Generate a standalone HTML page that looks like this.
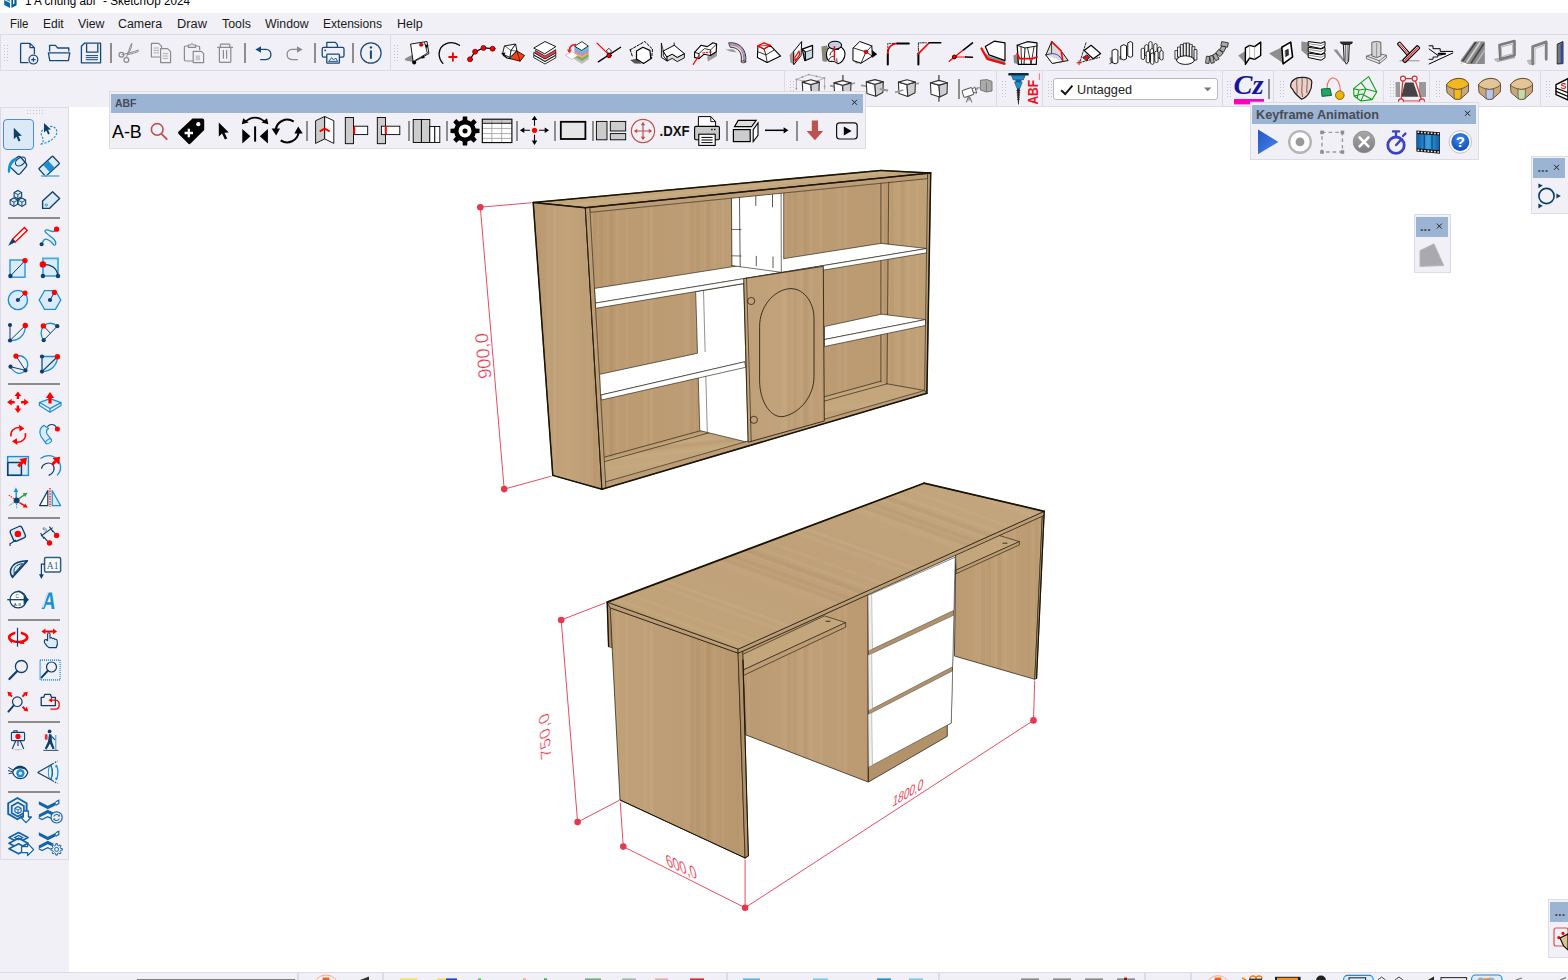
<!DOCTYPE html>
<html><head><meta charset="utf-8"><title>SketchUp</title>
<style>
html,body{margin:0;padding:0}
body{width:1568px;height:980px;overflow:hidden;background:#fff;position:relative;
 font-family:"Liberation Sans",sans-serif;font-size:12px;color:#000}
.abs{position:absolute}
.bg{position:absolute;background:#f1f0f6}
.tb{position:absolute;background:#f1f0f6;border:1px solid #dddce6;box-sizing:border-box}
.t{position:absolute;white-space:nowrap;transform-origin:0 50%;line-height:1}
.fl{position:absolute;background:#f1f0f6;border:1px solid #dddce6;box-sizing:border-box}
.flt{position:absolute;background:#9cb4d3}
.grip{position:absolute;width:5px;height:17px;
 background-image:radial-gradient(circle,#c4c4cf 0.6px,transparent 0.9px);background-size:3px 3px}
.gripv{position:absolute;width:17px;height:5px;
 background-image:radial-gradient(circle,#c4c4cf 0.6px,transparent 0.9px);background-size:3px 3px}
.sep{position:absolute;width:2px;background:#8e8e8e}
.sepb{position:absolute;width:1px;background:#8a8a8a}
.hsep{position:absolute;height:2px;background:#8c8c8c}
svg{position:absolute;left:0;top:0;overflow:visible}
</style></head>
<body>
<div class="abs" style="left:0;top:0;width:1568px;height:13px;background:#fff"></div>
<div class="t" id="ttl" style="transform:scaleX(0.9333);left:24.5px;top:-4.8px;font-size:12.5px;color:#000">1 A chung abf&quot; - SketchUp 2024</div>
<div class="bg" style="left:0;top:13px;width:1568px;height:94px"></div>
<div class="t" style="transform:scaleX(0.9129);left:10.2px;top:17.5px;font-size:12.5px;color:#1a1a1a">File</div>
<div class="t" style="transform:scaleX(0.9607);left:43px;top:17.5px;font-size:12.5px;color:#1a1a1a">Edit</div>
<div class="t" style="transform:scaleX(0.9860);left:78px;top:17.5px;font-size:12.5px;color:#1a1a1a">View</div>
<div class="t" style="transform:scaleX(0.9917);left:118.4px;top:17.5px;font-size:12.5px;color:#1a1a1a">Camera</div>
<div class="t" style="transform:scaleX(1.0250);left:177.4px;top:17.5px;font-size:12.5px;color:#1a1a1a">Draw</div>
<div class="t" style="transform:scaleX(0.9901);left:221.5px;top:17.5px;font-size:12.5px;color:#1a1a1a">Tools</div>
<div class="t" style="transform:scaleX(0.9827);left:265.3px;top:17.5px;font-size:12.5px;color:#1a1a1a">Window</div>
<div class="t" style="transform:scaleX(0.9647);left:323.4px;top:17.5px;font-size:12.5px;color:#1a1a1a">Extensions</div>
<div class="t" style="transform:scaleX(0.9993);left:397.3px;top:17.5px;font-size:12.5px;color:#1a1a1a">Help</div>
<div class="abs" style="left:0;top:34px;width:1568px;height:1px;background:#dddce6"></div>
<div class="tb" style="left:0px;top:34px;width:391px;height:37px"></div>
<div class="tb" style="left:390px;top:34px;width:1180px;height:37px"></div>
<div class="grip" style="left:3px;top:44px"></div>
<div class="grip" style="left:393px;top:44px"></div>
<div class="sep" style="left:110px;top:43px;height:20px"></div>
<div class="sep" style="left:244px;top:43px;height:20px"></div>
<div class="sep" style="left:314px;top:43px;height:20px"></div>
<div class="sep" style="left:352px;top:43px;height:20px"></div>
<div class="tb" style="left:784px;top:70px;width:214px;height:37px"></div>
<div class="grip" style="left:789px;top:80px"></div>
<div class="tb" style="left:996px;top:70px;width:48px;height:37px"></div>
<div class="grip" style="left:1001px;top:80px"></div>
<div class="tb" style="left:1042px;top:70px;width:182px;height:37px"></div>
<div class="grip" style="left:1047px;top:80px"></div>
<div class="tb" style="left:1222px;top:70px;width:53px;height:37px"></div>
<div class="grip" style="left:1226px;top:80px"></div>
<div class="tb" style="left:1273px;top:70px;width:112px;height:37px"></div>
<div class="grip" style="left:1279px;top:80px"></div>
<div class="tb" style="left:1383px;top:70px;width:48px;height:37px"></div>
<div class="grip" style="left:1389px;top:80px"></div>
<div class="tb" style="left:1429px;top:70px;width:113px;height:37px"></div>
<div class="grip" style="left:1435px;top:80px"></div>
<div class="tb" style="left:1540px;top:70px;width:31px;height:37px"></div>
<div class="grip" style="left:1545px;top:80px"></div>
<div class="sep" style="left:957.5px;top:79px;height:20px"></div>
<div class="sep" style="left:1268px;top:79px;height:20px"></div>
<div class="abs" style="left:1053px;top:78px;width:165px;height:21.5px;background:#fff;border:1px solid #b9b9c3;border-radius:3px;box-sizing:border-box"></div>
<div class="t" style="transform:scaleX(0.9392);left:1077px;top:82.5px;font-size:13.5px;color:#222">Untagged</div>
<div class="bg" style="left:0;top:107px;width:69px;height:866px"></div>
<div class="tb" style="left:0px;top:107px;width:69px;height:753px"></div>
<div class="gripv" style="left:26px;top:109px"></div>
<div class="abs" style="left:3px;top:119px;width:31px;height:31px;background:#dce9f7;border:1px solid #4a90d9;border-radius:4px;box-sizing:border-box"></div>
<div class="hsep" style="left:8px;top:217px;width:52px"></div>
<div class="hsep" style="left:8px;top:383px;width:52px"></div>
<div class="hsep" style="left:8px;top:517px;width:52px"></div>
<div class="hsep" style="left:8px;top:619px;width:52px"></div>
<div class="hsep" style="left:8px;top:721px;width:52px"></div>
<div class="hsep" style="left:8px;top:791px;width:52px"></div>
<div class="bg" style="left:0;top:972px;width:1568px;height:8px;border-top:1px solid #dddce6;box-sizing:border-box"></div>
<div class="abs" style="left:297px;top:973px;width:2px;height:7px;background:#dddce6"></div>
<div class="abs" style="left:382px;top:973px;width:2px;height:7px;background:#dddce6"></div>
<div class="abs" style="left:726px;top:973px;width:2px;height:7px;background:#dddce6"></div>
<div class="abs" style="left:938px;top:973px;width:2px;height:7px;background:#dddce6"></div>
<div class="abs" style="left:1144px;top:973px;width:2px;height:7px;background:#dddce6"></div>
<div class="abs" style="left:1190px;top:973px;width:2px;height:7px;background:#dddce6"></div>
<div class="abs" style="left:137px;top:978.5px;width:158px;height:1.5px;background:#7d7d80"></div>
<div class="fl" style="left:109px;top:91px;width:757px;height:58px"></div>
<div class="flt" style="left:111px;top:93.5px;width:752px;height:19px"></div>
<div class="t" style="transform:scaleX(0.9095);left:115px;top:97.5px;font-size:11.5px;font-weight:bold;color:#474b57">ABF</div>
<div class="sep" style="left:306px;top:121px;height:19.5px"></div>
<div class="sep" style="left:408px;top:121px;height:19.5px"></div>
<div class="sep" style="left:446px;top:121px;height:19.5px"></div>
<div class="sep" style="left:516px;top:121px;height:19.5px"></div>
<div class="sep" style="left:554px;top:121px;height:19.5px"></div>
<div class="sep" style="left:591.5px;top:121px;height:19.5px"></div>
<div class="sep" style="left:726px;top:121px;height:19.5px"></div>
<div class="sep" style="left:796px;top:121px;height:19.5px"></div>
<div class="fl" style="left:1250px;top:102px;width:229px;height:58px"></div>
<div class="flt" style="left:1252px;top:104.5px;width:224px;height:19px"></div>
<div class="t" style="transform:scaleX(0.9767);left:1256.3px;top:108px;font-size:13px;font-weight:bold;color:#474b57">Keyframe Animation</div>
<div class="fl" style="left:1531px;top:155.5px;width:40px;height:58.5px"></div>
<div class="flt" style="left:1533.3px;top:158.4px;width:32px;height:19.2px"></div>
<div class="t" style="left:1537.5px;top:161px;font-size:13px;font-weight:bold;color:#474b57">...</div>
<div class="fl" style="left:1414px;top:214px;width:37px;height:59px"></div>
<div class="flt" style="left:1416.4px;top:217.4px;width:31.4px;height:19.2px"></div>
<div class="t" style="left:1420px;top:220px;font-size:13px;font-weight:bold;color:#474b57">...</div>
<div class="fl" style="left:1548px;top:899px;width:24px;height:59px"></div>
<div class="flt" style="left:1550px;top:902px;width:20px;height:19.6px"></div>
<div class="t" style="left:1554.5px;top:905px;font-size:13px;font-weight:bold;color:#474b57">...</div>
<svg width="1568" height="980" viewBox="0 0 1568 980"><defs><linearGradient id="gSide" x1="0" y1="0" x2="1" y2="0"><stop offset="0" stop-color="#b99870"/><stop offset="0.5" stop-color="#c2a37a"/><stop offset="1" stop-color="#bb9a72"/></linearGradient><linearGradient id="gBack" x1="0" y1="0" x2="1" y2="0"><stop offset="0" stop-color="#bb9a70"/><stop offset="0.5" stop-color="#be9e76"/><stop offset="1" stop-color="#b9986f"/></linearGradient><linearGradient id="gDoor" x1="0" y1="0" x2="1" y2="0"><stop offset="0" stop-color="#bf9f77"/><stop offset="0.5" stop-color="#c2a37b"/><stop offset="1" stop-color="#bd9c74"/></linearGradient><linearGradient id="gRP" x1="0" y1="0" x2="1" y2="0"><stop offset="0" stop-color="#bc9b73"/><stop offset="0.5" stop-color="#c0a077"/><stop offset="1" stop-color="#ba9970"/></linearGradient><linearGradient id="gPed" x1="0" y1="0" x2="1" y2="0"><stop offset="0" stop-color="#bb9a72"/><stop offset="0.5" stop-color="#bfa078"/><stop offset="1" stop-color="#bb9971"/></linearGradient><linearGradient id="gLP" x1="0" y1="0" x2="1" y2="0"><stop offset="0" stop-color="#c0a178"/><stop offset="0.5" stop-color="#bd9d75"/><stop offset="1" stop-color="#b8966d"/></linearGradient><linearGradient id="gTop" x1="0" y1="1" x2="1" y2="0"><stop offset="0" stop-color="#c2a47a"/><stop offset="0.5" stop-color="#bfa079"/><stop offset="1" stop-color="#c4a77e"/></linearGradient><pattern id="grainV" width="97" height="40" patternUnits="userSpaceOnUse"><rect x="5.0" y="0" width="6" height="40" fill="#fff0cc" fill-opacity="0.034"/><rect x="11.0" y="0" width="4" height="40" fill="#5a3a10" fill-opacity="0.039"/><rect x="17.0" y="0" width="4" height="40" fill="#5a3a10" fill-opacity="0.048"/><rect x="25.0" y="0" width="1.5" height="40" fill="#fff0cc" fill-opacity="0.043"/><rect x="27.5" y="0" width="4" height="40" fill="#5a3a10" fill-opacity="0.057"/><rect x="34.5" y="0" width="2" height="40" fill="#fff0cc" fill-opacity="0.055"/><rect x="43.5" y="0" width="2" height="40" fill="#fff0cc" fill-opacity="0.046"/><rect x="61.0" y="0" width="4" height="40" fill="#fff0cc" fill-opacity="0.037"/><rect x="68.0" y="0" width="3" height="40" fill="#fff0cc" fill-opacity="0.064"/></pattern><pattern id="grainT" width="97" height="40" patternUnits="userSpaceOnUse" patternTransform="rotate(-70)"><rect x="5.0" y="0" width="6" height="40" fill="#fff0cc" fill-opacity="0.034"/><rect x="11.0" y="0" width="4" height="40" fill="#5a3a10" fill-opacity="0.039"/><rect x="17.0" y="0" width="4" height="40" fill="#5a3a10" fill-opacity="0.048"/><rect x="25.0" y="0" width="1.5" height="40" fill="#fff0cc" fill-opacity="0.043"/><rect x="27.5" y="0" width="4" height="40" fill="#5a3a10" fill-opacity="0.057"/><rect x="34.5" y="0" width="2" height="40" fill="#fff0cc" fill-opacity="0.055"/><rect x="43.5" y="0" width="2" height="40" fill="#fff0cc" fill-opacity="0.046"/><rect x="61.0" y="0" width="4" height="40" fill="#fff0cc" fill-opacity="0.037"/><rect x="68.0" y="0" width="3" height="40" fill="#fff0cc" fill-opacity="0.064"/></pattern><pattern id="grainC" width="97" height="40" patternUnits="userSpaceOnUse" patternTransform="rotate(84)"><rect x="5.0" y="0" width="6" height="40" fill="#fff0cc" fill-opacity="0.034"/><rect x="11.0" y="0" width="4" height="40" fill="#5a3a10" fill-opacity="0.039"/><rect x="17.0" y="0" width="4" height="40" fill="#5a3a10" fill-opacity="0.048"/><rect x="25.0" y="0" width="1.5" height="40" fill="#fff0cc" fill-opacity="0.043"/><rect x="27.5" y="0" width="4" height="40" fill="#5a3a10" fill-opacity="0.057"/><rect x="34.5" y="0" width="2" height="40" fill="#fff0cc" fill-opacity="0.055"/><rect x="43.5" y="0" width="2" height="40" fill="#fff0cc" fill-opacity="0.046"/><rect x="61.0" y="0" width="4" height="40" fill="#fff0cc" fill-opacity="0.037"/><rect x="68.0" y="0" width="3" height="40" fill="#fff0cc" fill-opacity="0.064"/></pattern></defs><polygon points="533.2,202.5 585.3,207.7 930.7,173.0 880.9,170.4" fill="#c3a67c" stroke="none"/><polygon points="533.2,202.5 585.3,207.7 930.7,173.0 880.9,170.4" fill="url(#grainC)" stroke="none"/><polygon points="533.2,202.5 585.3,207.7 930.7,173.0 880.9,170.4" fill="none" stroke="#1a1408" stroke-width="0.7" stroke-linejoin="round" />
<polygon points="533.2,202.5 585.3,207.7 601.9,489.2 552.8,475.4" fill="url(#gSide)" stroke="none"/><polygon points="533.2,202.5 585.3,207.7 601.9,489.2 552.8,475.4" fill="url(#grainV)" stroke="none"/><polygon points="533.2,202.5 585.3,207.7 601.9,489.2 552.8,475.4" fill="none" stroke="#1a1408" stroke-width="0.7" stroke-linejoin="round" />
<polygon points="589.8,212.4 927.7,178.6 924.6,390.2 605.5,481.9" fill="url(#gBack)" stroke="none"/><polygon points="589.8,212.4 927.7,178.6 924.6,390.2 605.5,481.9" fill="url(#grainV)" stroke="none"/><polygon points="589.8,212.4 927.7,178.6 924.6,390.2 605.5,481.9" fill="none" stroke="#1a1408" stroke-width="0" stroke-linejoin="round" />
<polygon points="604.8,459.5 880.9,382.0 887.0,383.8 924.5,390.5 605.5,481.9" fill="#c3a67c" stroke="none"/><polygon points="604.8,459.5 880.9,382.0 887.0,383.8 924.5,390.5 605.5,481.9" fill="url(#grainC)" stroke="none"/><polygon points="604.8,459.5 880.9,382.0 887.0,383.8 924.5,390.5 605.5,481.9" fill="none" stroke="#1a1408" stroke-width="0" stroke-linejoin="round" />
<line x1="604.8" y1="457.0" x2="880.9" y2="381.2" stroke="#1a1408" stroke-width="0.6" stroke-linecap="round" />
<line x1="604.8" y1="461.5" x2="887.0" y2="383.8" stroke="#1a1408" stroke-width="0.6" stroke-linecap="round" />
<polygon points="888.7,182.0 927.7,178.6 924.6,390.2 887.0,383.8" fill="#c0a077" stroke="none"/><polygon points="888.7,182.0 927.7,178.6 924.6,390.2 887.0,383.8" fill="url(#grainV)" stroke="none"/><polygon points="888.7,182.0 927.7,178.6 924.6,390.2 887.0,383.8" fill="none" stroke="#1a1408" stroke-width="0" stroke-linejoin="round" />
<line x1="880.9" y1="182.6" x2="880.9" y2="382.0" stroke="#1a1408" stroke-width="0.6" stroke-linecap="round" />
<line x1="888.7" y1="182.0" x2="887.0" y2="383.8" stroke="#1a1408" stroke-width="0.6" stroke-linecap="round" />
<line x1="887.0" y1="383.8" x2="924.5" y2="390.5" stroke="#1a1408" stroke-width="0.6" stroke-linecap="round" />
<polygon points="695.7,291.7 743.7,283.7 748.2,442.2 745.7,441.8 699.8,430.6" fill="#fff" stroke="none"/><polygon points="695.7,291.7 743.7,283.7 748.2,442.2 745.7,441.8 699.8,430.6" fill="none" stroke="#1a1408" stroke-width="0.6" stroke-linejoin="round" />
<line x1="703.5" y1="290.5" x2="707.3" y2="432.5" stroke="#444" stroke-width="0.6" stroke-linecap="round" />
<polygon points="594.5,288.4 880.9,243.4 926.9,248.5 595.3,303.1" fill="#fff" stroke="none"/><polygon points="594.5,288.4 880.9,243.4 926.9,248.5 595.3,303.1" fill="none" stroke="#1a1408" stroke-width="0.6" stroke-linejoin="round" />
<polygon points="595.3,303.1 926.9,248.5 926.9,252.8 595.7,308.3" fill="#fff" stroke="none"/><polygon points="595.3,303.1 926.9,248.5 926.9,252.8 595.7,308.3" fill="none" stroke="#1a1408" stroke-width="0.6" stroke-linejoin="round" />
<polygon points="731.5,198.2 783.7,193.0 783.7,259.7 781.3,272.3 731.9,265.6" fill="#fff" stroke="none"/><polygon points="731.5,198.2 783.7,193.0 783.7,259.7 781.3,272.3 731.9,265.6" fill="none" stroke="#1a1408" stroke-width="0" stroke-linejoin="round" />
<line x1="731.5" y1="198.2" x2="731.9" y2="265.6" stroke="#1a1408" stroke-width="0.7" stroke-linecap="round" />
<line x1="783.7" y1="193.0" x2="783.7" y2="258.7" stroke="#1a1408" stroke-width="0.6" stroke-linecap="round" />
<line x1="731.9" y1="265.6" x2="781.3" y2="272.3" stroke="#1a1408" stroke-width="0.6" stroke-linecap="round" />
<line x1="739.5" y1="197.4" x2="740.2" y2="266.6" stroke="#1a1408" stroke-width="0.7" stroke-linecap="round" />
<line x1="781.1" y1="193.3" x2="781.3" y2="272.3" stroke="#1a1408" stroke-width="0.6" stroke-linecap="round" />
<line x1="755.8" y1="196.3" x2="755.8" y2="205.5" stroke="#1a1408" stroke-width="0.7" stroke-linecap="round" />
<line x1="772.5" y1="194.7" x2="772.5" y2="206.8" stroke="#1a1408" stroke-width="0.7" stroke-linecap="round" />
<line x1="756.3" y1="256.3" x2="756.3" y2="265.8" stroke="#1a1408" stroke-width="0.7" stroke-linecap="round" />
<line x1="773.0" y1="257.0" x2="773.0" y2="267.6" stroke="#1a1408" stroke-width="0.7" stroke-linecap="round" />
<line x1="731.7" y1="229.4" x2="741.0" y2="229.6" stroke="#1a1408" stroke-width="0.6" stroke-linecap="round" />
<line x1="732.0" y1="255.8" x2="741.0" y2="256.0" stroke="#1a1408" stroke-width="0.6" stroke-linecap="round" />
<polygon points="600.2,374.2 696.8,353.4 745.6,345.0 744.7,361.8 600.9,395.0" fill="#fff" stroke="none"/><polygon points="600.2,374.2 696.8,353.4 745.6,345.0 744.7,361.8 600.9,395.0" fill="none" stroke="#1a1408" stroke-width="0" stroke-linejoin="round" />
<line x1="600.2" y1="374.2" x2="696.8" y2="353.4" stroke="#1a1408" stroke-width="0.6" stroke-linecap="round" />
<line x1="600.9" y1="395.0" x2="744.7" y2="361.8" stroke="#1a1408" stroke-width="0.6" stroke-linecap="round" />
<polygon points="600.9,395.0 744.7,361.8 745.7,367.3 601.4,400.0" fill="#fff" stroke="none"/><polygon points="600.9,395.0 744.7,361.8 745.7,367.3 601.4,400.0" fill="none" stroke="#1a1408" stroke-width="0.6" stroke-linejoin="round" />
<polygon points="824.5,326.5 881.5,314.2 925.5,319.6 824.5,339.5" fill="#fff" stroke="none"/><polygon points="824.5,326.5 881.5,314.2 925.5,319.6 824.5,339.5" fill="none" stroke="#1a1408" stroke-width="0.6" stroke-linejoin="round" />
<polygon points="824.5,339.5 925.5,319.6 925.4,325.5 824.5,346.5" fill="#fff" stroke="none"/><polygon points="824.5,339.5 925.5,319.6 925.4,325.5 824.5,346.5" fill="none" stroke="#1a1408" stroke-width="0.6" stroke-linejoin="round" />
<polygon points="605.5,481.9 924.5,390.5 926.9,393.3 601.9,489.2" fill="#bd9d75" stroke="none"/><polygon points="605.5,481.9 924.5,390.5 926.9,393.3 601.9,489.2" fill="none" stroke="#1a1408" stroke-width="0.6" stroke-linejoin="round" />
<polygon points="589.8,207.3 927.7,173.4 927.7,178.6 589.8,212.4" fill="#bd9d75" stroke="none"/><polygon points="589.8,207.3 927.7,173.4 927.7,178.6 589.8,212.4" fill="none" stroke="#1a1408" stroke-width="0.6" stroke-linejoin="round" />
<polygon points="743.7,278.6 823.3,266.3 824.3,421.0 748.2,442.2" fill="url(#gDoor)" stroke="none"/><polygon points="743.7,278.6 823.3,266.3 824.3,421.0 748.2,442.2" fill="url(#grainV)" stroke="none"/><polygon points="743.7,278.6 823.3,266.3 824.3,421.0 748.2,442.2" fill="none" stroke="#1a1408" stroke-width="0.8" stroke-linejoin="round" />
<line x1="746.6" y1="278.3" x2="751.2" y2="441.4" stroke="#1a1408" stroke-width="0.6" stroke-linecap="round" />
<path d="M759.6 380.6 L759.6 326.5 C759.6 307 773 291 788.3 288.8 C802.5 286.8 814 301.3 814 318.4 L814 376.5 C814 396.3 800 412.5 784.5 416.3 C771 419.5 759.6 401.5 759.6 380.6 Z" fill="none" stroke="#1a1408" stroke-width="0.8"/>
<circle cx="751.2" cy="301" r="3.6" fill="none" stroke="#1a1408" stroke-width="0.7"/>
<circle cx="753.9" cy="419.8" r="3.6" fill="none" stroke="#1a1408" stroke-width="0.7"/>
<polygon points="585.3,207.7 589.8,207.3 605.9,488.0 601.9,489.2" fill="#bd9d75" stroke="none"/><polygon points="585.3,207.7 589.8,207.3 605.9,488.0 601.9,489.2" fill="none" stroke="#1a1408" stroke-width="0.6" stroke-linejoin="round" />
<polygon points="927.7,173.4 930.7,173.0 926.9,393.3 924.6,390.2" fill="#bd9d75" stroke="none"/><polygon points="927.7,173.4 930.7,173.0 926.9,393.3 924.6,390.2" fill="none" stroke="#1a1408" stroke-width="0.6" stroke-linejoin="round" />
<line x1="533.2" y1="202.5" x2="880.9" y2="170.4" stroke="#1a1408" stroke-width="1.5" stroke-linecap="round" />
<line x1="880.9" y1="170.4" x2="930.7" y2="173.0" stroke="#1a1408" stroke-width="1.5" stroke-linecap="round" />
<line x1="533.2" y1="202.5" x2="552.8" y2="475.4" stroke="#1a1408" stroke-width="1.5" stroke-linecap="round" />
<line x1="552.8" y1="475.4" x2="601.9" y2="489.2" stroke="#1a1408" stroke-width="1.5" stroke-linecap="round" />
<line x1="601.9" y1="489.2" x2="926.9" y2="393.3" stroke="#1a1408" stroke-width="1.5" stroke-linecap="round" />
<line x1="930.7" y1="173.0" x2="926.9" y2="393.3" stroke="#1a1408" stroke-width="1.5" stroke-linecap="round" />
<line x1="533.2" y1="202.5" x2="585.3" y2="207.7" stroke="#1a1408" stroke-width="1.5" stroke-linecap="round" />
<line x1="585.3" y1="207.7" x2="930.7" y2="173.0" stroke="#1a1408" stroke-width="1.5" stroke-linecap="round" />
<line x1="585.3" y1="207.7" x2="601.9" y2="489.2" stroke="#1a1408" stroke-width="0.8" stroke-linecap="round" /><polygon points="955.8,554.0 1042.4,515.0 1034.8,679.3 954.4,656.0" fill="url(#gRP)" stroke="none"/><polygon points="955.8,554.0 1042.4,515.0 1034.8,679.3 954.4,656.0" fill="url(#grainV)" stroke="none"/><polygon points="955.8,554.0 1042.4,515.0 1034.8,679.3 954.4,656.0" fill="none" stroke="#1a1408" stroke-width="0.7" stroke-linejoin="round" />
<polygon points="1042.4,515.0 1044.2,515.4 1036.6,678.3 1034.8,679.3" fill="#bd9d75" stroke="none"/><polygon points="1042.4,515.0 1044.2,515.4 1036.6,678.3 1034.8,679.3" fill="none" stroke="#1a1408" stroke-width="0.6" stroke-linejoin="round" />
<polygon points="955.5,554.6 998.4,535.2 1019.4,541.6 956.1,570.1" fill="#c3a67c" stroke="none"/><polygon points="955.5,554.6 998.4,535.2 1019.4,541.6 956.1,570.1" fill="none" stroke="#1a1408" stroke-width="0.6" stroke-linejoin="round" />
<polygon points="956.1,570.1 1019.4,541.6 1019.4,544.9 956.1,573.7" fill="#bd9d75" stroke="none"/><polygon points="956.1,570.1 1019.4,541.6 1019.4,544.9 956.1,573.7" fill="none" stroke="#1a1408" stroke-width="0.6" stroke-linejoin="round" />
<line x1="1003.0" y1="543.2" x2="1007.0" y2="543.2" stroke="#1a1408" stroke-width="0.8" stroke-linecap="round" />
<polygon points="742.5,651.5 868.1,594.5 868.1,782.0 745.8,734.9" fill="url(#gPed)" stroke="none"/><polygon points="742.5,651.5 868.1,594.5 868.1,782.0 745.8,734.9" fill="url(#grainV)" stroke="none"/><polygon points="742.5,651.5 868.1,594.5 868.1,782.0 745.8,734.9" fill="none" stroke="#1a1408" stroke-width="0.7" stroke-linejoin="round" />
<polygon points="742.7,654.4 824.4,615.9 845.7,622.6 743.6,669.8" fill="#c3a67c" stroke="none"/><polygon points="742.7,654.4 824.4,615.9 845.7,622.6 743.6,669.8" fill="none" stroke="#1a1408" stroke-width="0.6" stroke-linejoin="round" />
<polygon points="743.6,669.8 845.7,622.6 845.7,627.1 743.6,675.4" fill="#bd9d75" stroke="none"/><polygon points="743.6,669.8 845.7,622.6 845.7,627.1 743.6,675.4" fill="none" stroke="#1a1408" stroke-width="0.6" stroke-linejoin="round" />
<line x1="826.0" y1="621.3" x2="830.0" y2="621.3" stroke="#1a1408" stroke-width="0.8" stroke-linecap="round" />
<polygon points="868.1,597.0 955.2,557.6 951.2,723.1 947.3,725.0 947.3,736.3 868.5,782.0" fill="#b39169" stroke="none"/><polygon points="868.1,597.0 955.2,557.6 951.2,723.1 947.3,725.0 947.3,736.3 868.5,782.0" fill="none" stroke="#1a1408" stroke-width="0.7" stroke-linejoin="round" />
<line x1="868.5" y1="766.3" x2="947.3" y2="725.0" stroke="#1a1408" stroke-width="0.6" stroke-linecap="round" />
<polygon points="869.5,594.9 955.2,557.2 953.9,610.3 870.3,650.1" fill="#fff" stroke="none"/><polygon points="869.5,594.9 955.2,557.2 953.9,610.3 870.3,650.1" fill="none" stroke="#555" stroke-width="0.6" stroke-linejoin="round" />
<polygon points="868.1,595.5 871.7,593.9 872.5,649.1 868.7,650.7" fill="#ededed" stroke="none"/><polygon points="868.1,595.5 871.7,593.9 872.5,649.1 868.7,650.7" fill="none" stroke="#777" stroke-width="0.4" stroke-linejoin="round" />
<polygon points="869.5,654.6 953.9,615.1 952.6,666.8 870.3,709.8" fill="#fff" stroke="none"/><polygon points="869.5,654.6 953.9,615.1 952.6,666.8 870.3,709.8" fill="none" stroke="#555" stroke-width="0.6" stroke-linejoin="round" />
<polygon points="868.1,655.2 871.7,653.6 872.5,708.8 868.7,710.4" fill="#ededed" stroke="none"/><polygon points="868.1,655.2 871.7,653.6 872.5,708.8 868.7,710.4" fill="none" stroke="#777" stroke-width="0.4" stroke-linejoin="round" />
<polygon points="869.5,713.8 952.6,670.8 951.2,723.1 870.3,766.3" fill="#fff" stroke="none"/><polygon points="869.5,713.8 952.6,670.8 951.2,723.1 870.3,766.3" fill="none" stroke="#555" stroke-width="0.6" stroke-linejoin="round" />
<polygon points="868.1,714.4 871.7,712.8 872.5,765.3 868.7,766.9" fill="#ededed" stroke="none"/><polygon points="868.1,714.4 871.7,712.8 872.5,765.3 868.7,766.9" fill="none" stroke="#777" stroke-width="0.4" stroke-linejoin="round" />
<polygon points="610.1,607.8 738.1,653.1 745.1,858.0 620.0,800.0" fill="url(#gLP)" stroke="none"/><polygon points="610.1,607.8 738.1,653.1 745.1,858.0 620.0,800.0" fill="url(#grainV)" stroke="none"/><polygon points="610.1,607.8 738.1,653.1 745.1,858.0 620.0,800.0" fill="none" stroke="#1a1408" stroke-width="0.7" stroke-linejoin="round" />
<polygon points="738.1,653.1 742.7,651.1 748.4,855.8 745.1,858.0" fill="#b39169" stroke="none"/><polygon points="738.1,653.1 742.7,651.1 748.4,855.8 745.1,858.0" fill="none" stroke="#1a1408" stroke-width="0.6" stroke-linejoin="round" />
<polygon points="607.2,602.1 610.1,607.8 611.7,648.0 608.6,646.5" fill="#b39169" stroke="none"/><polygon points="607.2,602.1 610.1,607.8 611.7,648.0 608.6,646.5" fill="none" stroke="#1a1408" stroke-width="0.5" stroke-linejoin="round" />
<polygon points="607.2,602.1 738.1,649.1 738.1,653.1 610.1,607.8" fill="#bd9d75" stroke="none"/><polygon points="607.2,602.1 738.1,649.1 738.1,653.1 610.1,607.8" fill="none" stroke="#1a1408" stroke-width="0.7" stroke-linejoin="round" />
<polygon points="738.1,649.1 1044.2,511.3 1044.2,515.4 742.7,651.1 738.1,653.1" fill="#bd9d75" stroke="none"/><polygon points="738.1,649.1 1044.2,511.3 1044.2,515.4 742.7,651.1 738.1,653.1" fill="none" stroke="#1a1408" stroke-width="0.7" stroke-linejoin="round" />
<polygon points="607.2,602.1 924.0,483.2 1044.2,511.3 738.1,649.1" fill="url(#gTop)" stroke="none"/><polygon points="607.2,602.1 924.0,483.2 1044.2,511.3 738.1,649.1" fill="url(#grainT)" stroke="none"/><polygon points="607.2,602.1 924.0,483.2 1044.2,511.3 738.1,649.1" fill="none" stroke="#1a1408" stroke-width="0.7" stroke-linejoin="round" />
<line x1="607.2" y1="602.1" x2="924.0" y2="483.2" stroke="#1a1408" stroke-width="1.7" stroke-linecap="round" />
<line x1="924.0" y1="483.2" x2="1044.2" y2="511.3" stroke="#1a1408" stroke-width="1.7" stroke-linecap="round" />
<line x1="607.2" y1="602.1" x2="608.6" y2="646.5" stroke="#1a1408" stroke-width="1.4" stroke-linecap="round" />
<line x1="1044.2" y1="511.3" x2="1036.6" y2="678.3" stroke="#1a1408" stroke-width="1.2" stroke-linecap="round" />
<line x1="620.0" y1="800.0" x2="745.1" y2="858.0" stroke="#1a1408" stroke-width="1.0" stroke-linecap="round" />
<line x1="745.1" y1="858.0" x2="748.4" y2="855.8" stroke="#1a1408" stroke-width="1.0" stroke-linecap="round" />
<line x1="748.4" y1="855.8" x2="742.9" y2="660.0" stroke="#1a1408" stroke-width="1.0" stroke-linecap="round" /><line x1="480.3" y1="207.2" x2="504.2" y2="489.1" stroke="#e5384e" stroke-width="0.9" stroke-linecap="round" />
<line x1="531.0" y1="202.8" x2="480.3" y2="207.2" stroke="#e5384e" stroke-width="0.9" stroke-linecap="round" />
<line x1="551.0" y1="476.3" x2="504.2" y2="489.1" stroke="#e5384e" stroke-width="0.9" stroke-linecap="round" />
<circle cx="480.3" cy="207.2" r="3.3" fill="#e5384e"/>
<circle cx="504.2" cy="489.1" r="3.3" fill="#e5384e"/>
<line x1="561.2" y1="620.0" x2="577.6" y2="822.1" stroke="#e5384e" stroke-width="0.9" stroke-linecap="round" />
<line x1="605.0" y1="603.0" x2="561.2" y2="620.0" stroke="#e5384e" stroke-width="0.9" stroke-linecap="round" />
<line x1="619.0" y1="800.5" x2="577.6" y2="822.1" stroke="#e5384e" stroke-width="0.9" stroke-linecap="round" />
<circle cx="561.2" cy="620.0" r="3.3" fill="#e5384e"/>
<circle cx="577.6" cy="822.1" r="3.3" fill="#e5384e"/>
<line x1="623.3" y1="846.6" x2="745.1" y2="907.7" stroke="#e5384e" stroke-width="0.9" stroke-linecap="round" />
<line x1="620.3" y1="803.0" x2="623.3" y2="846.6" stroke="#e5384e" stroke-width="0.9" stroke-linecap="round" />
<line x1="745.1" y1="860.0" x2="745.1" y2="907.7" stroke="#e5384e" stroke-width="0.9" stroke-linecap="round" />
<circle cx="623.3" cy="846.6" r="3.3" fill="#e5384e"/>
<circle cx="745.1" cy="907.7" r="3.3" fill="#e5384e"/>
<line x1="745.1" y1="907.7" x2="1033.5" y2="720.4" stroke="#e5384e" stroke-width="0.9" stroke-linecap="round" />
<line x1="1034.7" y1="681.0" x2="1033.5" y2="720.4" stroke="#e5384e" stroke-width="0.9" stroke-linecap="round" />
<circle cx="1033.5" cy="720.4" r="3.3" fill="#e5384e"/>
<text x="0" y="6.62" transform="matrix(-0.0845 -0.9964 0.9964 -0.0845 483 356)" text-anchor="middle" font-family="Liberation Sans, sans-serif" font-size="18.5" textLength="46" lengthAdjust="spacingAndGlyphs" fill="#e5384e" stroke="#fff" stroke-width="0.3">900,0</text>
<text x="0" y="5.73" transform="matrix(-0.05 -0.999 0.905 -0.42 544.7 736.4)" text-anchor="middle" font-family="Liberation Sans, sans-serif" font-size="16" textLength="45" lengthAdjust="spacingAndGlyphs" fill="#e5384e" stroke="#fff" stroke-width="0.3">750,0</text>
<text x="0" y="6.44" transform="matrix(0.9105 0.4153 0.22 0.975 681 866.4)" text-anchor="middle" font-family="Liberation Sans, sans-serif" font-size="18" textLength="33.5" lengthAdjust="spacingAndGlyphs" fill="#e5384e" stroke="#fff" stroke-width="0.12">600,0</text>
<text x="0" y="5.55" transform="matrix(0.854 -0.52 -0.1376 0.9905 908.1 792.4)" text-anchor="middle" font-family="Liberation Sans, sans-serif" font-size="15.5" textLength="36" lengthAdjust="spacingAndGlyphs" fill="#e5384e" stroke="#fff" stroke-width="0.05">1800,0</text></svg>
<svg width="1568" height="980" viewBox="0 0 1568 980"><g>
<text x="112" y="137.8" font-family="Liberation Sans, sans-serif" font-size="18" textLength="29.8" lengthAdjust="spacingAndGlyphs" fill="#000">A-B</text>
<circle cx="157.2" cy="129.4" r="5.8" fill="none" stroke="#c0504d" stroke-width="1.6"/><line x1="161.5" y1="133.8" x2="167.3" y2="139.6" stroke="#c0504d" stroke-width="1.8"/>
<path d="M192.5 118.6 L202.2 118.6 Q204.2 118.6 204.2 120.6 L204.2 130 L190.6 143.6 Q189.4 144.8 188.2 143.6 L178.6 134 Q177.4 132.8 178.6 131.6 Z" fill="#000"/>
<circle cx="198.3" cy="124.2" r="2.1" fill="#fff"/>
<path d="M184.6 133 h8.4 M188.8 128.8 v8.4" stroke="#fff" stroke-width="2.3" fill="none"/>
<path d="M218.8 122.6 L218.8 136.6 L222.1 133.6 L224.9 139.6 L227.2 138.5 L224.5 132.7 L228.8 132.4 Z" fill="#000"/>
<path d="M242.3 129 L250.4 136.2 L242.3 143.4 Z M267.9 129 L259.8 136.2 L267.9 143.4 Z" fill="#000"/>
<rect x="254.1" y="126.4" width="2" height="15.2" fill="#000"/>
<path d="M245.2 121.8 Q255 113.5 265 121.8" fill="none" stroke="#000" stroke-width="1.7"/>
<path d="M241.8 124.2 L243.2 118.2 L248.6 122.6 Z M268.4 124.2 L267 118.2 L261.6 122.6 Z" fill="#000"/>
<path d="M275.8 130.0 A11.4 11.4 0 0 1 293.7 121.7 M298.6 132.0 A11.4 11.4 0 0 1 280.7 140.3" fill="none" stroke="#000" stroke-width="2.1"/>
<path d="M271.6 128.6 L280 128.6 L276.2 135.6 Z M302.8 133.4 L294.4 133.4 L298.2 126.4 Z" fill="#000"/>
<path d="M315.6 120.7 L324.7 116.5 L324.7 138.9 L315.6 143.4 Z" fill="#ccc" stroke="#000" stroke-width="0.9"/>
<path d="M324.7 116.5 L333.8 120.7 L333.8 143.4 L324.7 138.9 Z" fill="#fff" stroke="#000" stroke-width="0.9"/>
<path d="M319.7 131.4 L324.7 128.6 L329.7 131.4" fill="none" stroke="#f00" stroke-width="1.8"/>
<rect x="345.3" y="117.5" width="8.2" height="26.2" fill="#ccc" stroke="#000" stroke-width="0.9"/><rect x="353.5" y="126.2" width="14.2" height="8.4" fill="#fff" stroke="#000" stroke-width="0.9"/><rect x="353.4" y="126.8" width="1.8" height="7.2" fill="#f00"/>
<rect x="377.3" y="117.5" width="8.2" height="26.2" fill="#ccc" stroke="#000" stroke-width="0.9"/><rect x="381.4" y="126.2" width="18.4" height="8.4" fill="#fff" stroke="#000" stroke-width="0.9"/><rect x="384.8" y="126.8" width="2" height="7.2" fill="#f00"/>
<rect x="413.2" y="119.5" width="8.2" height="23" fill="#ccc" stroke="#000" stroke-width="0.9"/><rect x="421.4" y="119.5" width="8.4" height="23" fill="#ccc" stroke="#000" stroke-width="0.9"/>
<rect x="429.8" y="126.5" width="5" height="16" fill="#fff" stroke="#000" stroke-width="0.9"/><rect x="434.8" y="126.5" width="5" height="16" fill="#fff" stroke="#000" stroke-width="0.9"/>
<path d="M462.6 120.6 L462.8 116.4 L467.2 116.4 L467.4 120.6 L470.6 121.9 L473.7 119.1 L476.8 122.2 L474.0 125.3 L475.3 128.5 L479.5 128.7 L479.5 133.1 L475.3 133.3 L474.0 136.5 L476.8 139.6 L473.7 142.7 L470.6 139.9 L467.4 141.2 L467.2 145.4 L462.8 145.4 L462.6 141.2 L459.4 139.9 L456.3 142.7 L453.2 139.6 L456.0 136.5 L454.7 133.3 L450.5 133.1 L450.5 128.7 L454.7 128.5 L456.0 125.3 L453.2 122.2 L456.3 119.1 L459.4 121.9 Z" fill="#000"/><circle cx="465" cy="130.9" r="10.8" fill="#000"/><circle cx="465" cy="130.9" r="6.5" fill="#fff"/><circle cx="465" cy="130.9" r="2.5" fill="#000"/>
<rect x="482.3" y="119.2" width="29.6" height="23.4" fill="#fff"/><rect x="482.3" y="119.2" width="29.6" height="4" fill="#c8c8c8"/>
<path d="M491.8 119.2 v23.4 M501.7 119.2 v23.4 M482.3 128.4 h29.6 M482.3 133.6 h29.6 M482.3 138.4 h29.6" stroke="#999" stroke-width="0.8" fill="none"/>
<path d="M482.3 123.3 h29.6" stroke="#000" stroke-width="0.9"/><rect x="482.3" y="119.2" width="29.6" height="23.4" fill="none" stroke="#000" stroke-width="1.1"/>
<circle cx="534.5" cy="130.3" r="2.6" fill="#f00"/>
<path d="M522.5 130.3 h7.5 M539.0 130.3 h7.5 M534.5 118.30000000000001 v7.5 M534.5 134.8 v7.5" stroke="#000" stroke-width="1.1"/>
<path d="M519.9 130.3 l4.4 -2.8 v5.6 Z M549.1 130.3 l-4.4 -2.8 v5.6 Z M534.5 115.70000000000002 l-2.8 4.4 h5.6 Z M534.5 144.9 l-2.8 -4.4 h5.6 Z" fill="#000"/>
<rect x="560.8" y="121.8" width="24.6" height="17.2" fill="#e6e6e6" stroke="#000" stroke-width="1.8"/>
<rect x="596.4" y="121.4" width="10.6" height="18.4" fill="#ccc" stroke="#000" stroke-width="0.9"/><rect x="610.3" y="121.4" width="15.4" height="9.6" fill="#ccc" stroke="#000" stroke-width="0.9"/><rect x="610.3" y="133.6" width="15.4" height="6.2" fill="#ccc" stroke="#000" stroke-width="0.9"/>
<circle cx="643" cy="131" r="11.6" fill="none" stroke="#c0504d" stroke-width="1.2"/>
<path d="M636 131 h14 M643 124 v14" stroke="#c0504d" stroke-width="1.2"/>
<path d="M633.8 131 l3.4 -2.2 v4.4 Z M652.2 131 l-3.4 -2.2 v4.4 Z M643 121.8 l-2.2 3.4 h4.4 Z M643 140.2 l-2.2 -3.4 h4.4 Z" fill="#c0504d"/>
<text x="659.6" y="136.3" font-family="Liberation Sans, sans-serif" font-weight="bold" font-size="14.4" textLength="30" lengthAdjust="spacingAndGlyphs" fill="#111">.DXF</text>
<path d="M698.4 116.6 L710.8 116.6 L715.6 121.6 L715.6 127 L698.4 127 Z" fill="#fff" stroke="#000" stroke-width="1"/><path d="M710.8 116.6 L710.8 121.6 L715.6 121.6" fill="none" stroke="#000" stroke-width="0.9"/>
<rect x="694.6" y="126.4" width="24.8" height="13.4" rx="1.2" fill="#c9c9c9" stroke="#000" stroke-width="1.1"/>
<rect x="711.2" y="128.8" width="1.4" height="1.4" fill="#000"/><rect x="714" y="128.8" width="1.4" height="1.4" fill="#000"/>
<rect x="698.8" y="134.2" width="16.4" height="11.2" fill="#fff" stroke="#000" stroke-width="1.1"/><path d="M701.4 137.4 h11.2 M701.4 140 h11.2 M701.4 142.6 h11.2" stroke="#000" stroke-width="1"/>
<rect x="733.4" y="129.6" width="16.8" height="12" fill="#ccc" stroke="#000" stroke-width="1.2"/>
<path d="M734.6 126.6 L738.2 120.4 L756.2 120.4 L751.6 126.6 Z" fill="#ddd" stroke="#000" stroke-width="1.1"/>
<path d="M753.2 129.6 L758 123 L758 135.4 L753.2 141.6 Z" fill="#fff" stroke="#000" stroke-width="1.1"/>
<path d="M765 130.3 H785" stroke="#000" stroke-width="1.5"/><path d="M788.4 130.3 L783.6 127.2 V133.4 Z" fill="#000"/>
<path d="M811.8 120.4 H818 V131 H823.2 L814.9 140.2 L806.6 131 H811.8 Z" fill="#c0504d"/>
<rect x="836.6" y="122.8" width="20.6" height="16.2" rx="3" fill="#f1f0f6" stroke="#111" stroke-width="1.2"/><path d="M843.8 126.4 V135.6 L851.6 131 Z" fill="#000"/>
<path d="M852 99.8 l5 5 M857 99.8 l-5 5" stroke="#222" stroke-width="1"/>
</g>
<defs><linearGradient id="kPlay" x1="0" y1="0" x2="1" y2="1"><stop offset="0" stop-color="#2456c8"/><stop offset="1" stop-color="#4a86ee"/></linearGradient><radialGradient id="kHelp" cx="0.5" cy="0.35" r="0.7"><stop offset="0" stop-color="#3f8df0"/><stop offset="1" stop-color="#0d47b5"/></radialGradient><linearGradient id="kX" x1="0" y1="0" x2="0" y2="1"><stop offset="0" stop-color="#a8a8a8"/><stop offset="1" stop-color="#7e7e7e"/></linearGradient><linearGradient id="kFilm" x1="0" y1="0" x2="1" y2="0"><stop offset="0" stop-color="#0d5ea8"/><stop offset="0.5" stop-color="#3aa0e0"/><stop offset="1" stop-color="#0d5ea8"/></linearGradient></defs>
<path d="M1258 129.6 V154.2 L1278.4 141.9 Z" fill="url(#kPlay)"/>
<circle cx="1300" cy="141.9" r="10.8" fill="#fdfdfd" stroke="#b5b5b5" stroke-width="2.4"/><circle cx="1300" cy="141.9" r="4.4" fill="#9a9a9a"/>
<rect x="1322" y="132.4" width="20.4" height="19.6" fill="none" stroke="#9a9a9a" stroke-width="1.4" stroke-dasharray="3.6 3"/>
<rect x="1320.2" y="130.6" width="3.6" height="3.6" fill="#8e8e8e"/>
<rect x="1320.2" y="150.2" width="3.6" height="3.6" fill="#8e8e8e"/>
<rect x="1340.6" y="130.6" width="3.6" height="3.6" fill="#8e8e8e"/>
<rect x="1340.6" y="150.2" width="3.6" height="3.6" fill="#8e8e8e"/>
<circle cx="1364" cy="141.9" r="10.8" fill="url(#kX)" stroke="#8a8a8a" stroke-width="0.8"/><path d="M1359.6 137.5 l8.8 8.8 M1368.4 137.5 l-8.8 8.8" stroke="#fff" stroke-width="2.6" stroke-linecap="round"/>
<circle cx="1396" cy="145.2" r="8.2" fill="none" stroke="#3b45c4" stroke-width="2.8"/><path d="M1393 131.4 h6 M1396 131.4 v4.5 M1396.2 145 l4.2 -4.6 M1403 136 l2.4 -2.4" stroke="#3b45c4" stroke-width="2.4" stroke-linecap="round" fill="none"/>
<path d="M1416.4 130.4 L1440 132.2 L1440 153.8 L1416.4 151.6 Z" fill="#111"/><path d="M1416.8 134 L1439.6 135.6 L1439.6 150.2 L1416.8 148.2 Z" fill="url(#kFilm)"/>
<path d="M1424.2 134.4 V148.9 M1432 135 V149.6" stroke="#0a2c55" stroke-width="0.9"/>
<rect x="1417.6" y="131.4" width="1.7" height="1.6" fill="#e8e8e8"/><rect x="1417.6" y="149.4" width="1.7" height="1.6" fill="#e8e8e8"/>
<rect x="1420.9" y="131.7" width="1.7" height="1.6" fill="#e8e8e8"/><rect x="1420.9" y="149.7" width="1.7" height="1.6" fill="#e8e8e8"/>
<rect x="1424.2" y="131.9" width="1.7" height="1.6" fill="#e8e8e8"/><rect x="1424.2" y="150.0" width="1.7" height="1.6" fill="#e8e8e8"/>
<rect x="1427.5" y="132.2" width="1.7" height="1.6" fill="#e8e8e8"/><rect x="1427.5" y="150.3" width="1.7" height="1.6" fill="#e8e8e8"/>
<rect x="1430.8" y="132.4" width="1.7" height="1.6" fill="#e8e8e8"/><rect x="1430.8" y="150.6" width="1.7" height="1.6" fill="#e8e8e8"/>
<rect x="1434.1" y="132.7" width="1.7" height="1.6" fill="#e8e8e8"/><rect x="1434.1" y="150.9" width="1.7" height="1.6" fill="#e8e8e8"/>
<rect x="1437.4" y="132.9" width="1.7" height="1.6" fill="#e8e8e8"/><rect x="1437.4" y="151.2" width="1.7" height="1.6" fill="#e8e8e8"/>
<circle cx="1460.3" cy="141.9" r="11.3" fill="#fafafa" stroke="#c2c2c8" stroke-width="1"/><circle cx="1460.3" cy="141.9" r="9" fill="url(#kHelp)"/>
<text x="1460.3" y="147.2" text-anchor="middle" font-family="Liberation Sans, sans-serif" font-weight="bold" font-size="15" fill="#fff">?</text>
<path d="M1465 110.8 l5 5 M1470 110.8 l-5 5" stroke="#222" stroke-width="1"/>
<path d="M1554 164.8 l5 5 M1559 164.8 l-5 5" stroke="#222" stroke-width="1"/>
<circle cx="1546.5" cy="196" r="7.6" fill="none" stroke="#0d3e66" stroke-width="1.6"/><path d="M1538.4 183.4 l4.4 2.2 -4.4 2.6 Z M1538.4 203.4 l4.4 2.4 -4.4 2.6 Z M1556.4 193.4 l4.4 2.5 -4.4 2.5 Z" fill="#0d3e66"/>
<path d="M1436.8 223.6 l5 5 M1441.8 223.6 l-5 5" stroke="#222" stroke-width="1"/>
<path d="M1420 250.6 L1434 243.8 L1443.8 265.6 L1420 266.4 Z" fill="#aaaaae" stroke="#b9b9bd" stroke-width="1" stroke-linejoin="round"/>
<rect x="1554" y="928" width="14" height="18" rx="2" fill="none" stroke="#e0504f" stroke-width="1.2"/><circle cx="1558.8" cy="937.6" r="1.6" fill="#f00"/><circle cx="1563" cy="933.4" r="1.6" fill="#f00"/><path d="M1560 938 L1568 934 L1568 950 L1563.6 946 Z" fill="#d8c48f" stroke="#111" stroke-width="1.2"/>
<path d="M4.2 0 L4.2 5 L10 8 L10 3 Z" fill="#0a6ab0"/><path d="M11.4 0 L11.4 8 L16.6 5.2 L16.6 0 L14.4 0 L14.4 3.6 L13 4.4 L13 0 Z" fill="#0a5a9a"/><path d="M6 0 L10 2 L10 0 Z" fill="#3a9ad8"/>
<path d="M20.6 43.4 H30 L34.4 47.6 V54 M28.4 62.6 H20.6 V43.4 M30 43.4 V47.6 H34.4" fill="none" stroke="#174a7c" stroke-width="1.3" stroke-linejoin="round"/><circle cx="33.4" cy="59.6" r="4.4" fill="#f1f0f6" stroke="#174a7c" stroke-width="1.2"/><path d="M31.2 59.6 h4.4 M33.4 57.4 v4.4" stroke="#174a7c" stroke-width="1.2"/>
<path d="M49.6 51.6 V45.4 H55.4 L57.8 48 H68.8 V51.4" fill="none" stroke="#174a7c" stroke-width="1.3" stroke-linejoin="round"/><path d="M48.4 52.8 H69.8 L68.4 60.6 H49.8 Z" fill="none" stroke="#174a7c" stroke-width="1.3" stroke-linejoin="round"/>
<path d="M84.4 43.2 H100.6 V62.8 H81.4 V46.2 Z" fill="none" stroke="#174a7c" stroke-width="1.3" stroke-linejoin="round"/><path d="M86.6 43.4 V52.2 H97.8 V43.4" fill="none" stroke="#174a7c" stroke-width="1.3"/><path d="M85.8 55.6 H98 M85.8 57.6 H98 M85.8 59.7 H98" stroke="#174a7c" stroke-width="1"/>
<path d="M131.6 43.4 C129.6 48 127.6 53 126.4 58 M138.8 50 C133 52 126 53.8 121.6 54.6 M132 43.4 C131.4 48.4 129.6 52 127.4 54.4 M138.6 51.4 C133.6 53.4 129.6 54.4 127 54.6" fill="none" stroke="#8b8b8b" stroke-width="1"/><circle cx="121.4" cy="54.8" r="2.4" fill="none" stroke="#8b8b8b" stroke-width="1.2"/><circle cx="126.4" cy="60" r="2.4" fill="none" stroke="#8b8b8b" stroke-width="1.2"/>
<path d="M151.4 43.4 H158.6 L161.6 46.4 V57 H151.4 Z" fill="#f1f0f6" stroke="#8b8b8b" stroke-width="1.2" stroke-linejoin="round"/><path d="M160.6 48.6 H167.6 L170.6 51.6 V62.6 H160.6 Z" fill="#f1f0f6" stroke="#8b8b8b" stroke-width="1.2" stroke-linejoin="round"/><path d="M153.6 48 h5.4 M153.6 50.4 h5.4 M153.6 52.8 h5.4 M162.8 53.6 h5.4 M162.8 56 h5.4 M162.8 58.4 h5.4" stroke="#a9a9a9" stroke-width="0.9"/>
<path d="M188.4 46 H185.6 Q184.4 46 184.4 47.2 V59.8 Q184.4 61 185.6 61 H193 M195.6 46 H198.4 Q199.6 46 199.6 47.2 V50" fill="none" stroke="#8b8b8b" stroke-width="1.2"/><path d="M188.4 47.4 V45 H190.4 Q192 42.4 193.6 45 H195.6 V47.4 Z" fill="none" stroke="#8b8b8b" stroke-width="1.1"/><path d="M193.2 51.4 H201.4 L203.6 53.6 V62.6 H193.2 Z" fill="#f1f0f6" stroke="#8b8b8b" stroke-width="1.2" stroke-linejoin="round"/><rect x="195.6" y="55.4" width="4.4" height="5" fill="#c8c8cc"/>
<path d="M217.2 47.4 H233 M220.4 47.4 V45 Q220.4 44.2 221.2 44.2 H229 Q229.8 44.2 229.8 45 V47.4 M219.4 47.6 V61.4 Q219.4 62.4 220.4 62.4 H229.8 Q230.8 62.4 230.8 61.4 V47.6 M223.4 50 V58.8 M226.6 50 V58.8" fill="none" stroke="#8b8b8b" stroke-width="1.2"/>
<path d="M260.6 49.4 H265.8 C272.6 49.6 272.6 59.4 265.8 59.6 H260.2" fill="none" stroke="#174a7c" stroke-width="1.3"/><path d="M255.4 49.4 L261 46.2 V52.8 Z" fill="#174a7c"/>
<path d="M297.4 49.4 H292.2 C285.4 49.6 285.4 59.4 292.2 59.6 H297.8" fill="none" stroke="#8b8b8b" stroke-width="1.3"/><path d="M302.6 49.4 L297 46.2 V52.8 Z" fill="#8b8b8b"/>
<path d="M326.8 47 V42.4 H335.4 L337.4 44.6 V47" fill="none" stroke="#174a7c" stroke-width="1.3" stroke-linejoin="round"/><path d="M326.6 57.2 H323.8 Q322.2 57.2 322.2 55.6 V49 Q322.2 47.4 323.8 47.4 H342.4 Q344 47.4 344 49 V55.6 Q344 57.2 342.4 57.2 H339.6" fill="none" stroke="#174a7c" stroke-width="1.3"/><rect x="326.8" y="54.2" width="12.6" height="9" rx="0.8" fill="#f1f0f6" stroke="#174a7c" stroke-width="1.3"/><path d="M328.6 61.4 L331.6 57.6 L333.6 60 L335.6 58 L337.8 61.4 Z" fill="none" stroke="#174a7c" stroke-width="0.9"/><circle cx="325.2" cy="50.4" r="0.9" fill="#174a7c"/>
<circle cx="370.9" cy="53" r="10.2" fill="none" stroke="#174a7c" stroke-width="1.2"/><rect x="369.9" y="50.4" width="2" height="8.4" fill="#174a7c"/><circle cx="370.9" cy="47.4" r="1.2" fill="#174a7c"/>
<g transform="translate(405 41)" stroke-linejoin="round" stroke-linecap="round"><path d="M-0.3 17.7 L6.7 13.9 L8.6 20.9 L0.3 19.6 Z" fill="#8f8f8f" stroke="none" stroke-width="0" /><path d="M6 3 L22 0.5 L23.9 12.6 L8.6 20.9 Z" fill="#fff" stroke="#000" stroke-width="0.9" /><path d="M19.6 1.6 L22.4 12.2 L10 19.4" fill="none" stroke="#000" stroke-width="0.8" /><path d="M21.6 7 L20 3.4 L23 4.4 Z" fill="#000" stroke="#000" stroke-width="0.3" /><path d="M19.6 16.8 L16.4 17.4 L18.4 14.6 Z" fill="#000" stroke="#000" stroke-width="0.3" /><circle cx="16.2" cy="3.7" r="1.8" fill="#e00" stroke="#700" stroke-width="0.5"/><circle cx="9.2" cy="21.6" r="2" fill="#000" stroke="none" stroke-width="0"/></g>
<g transform="translate(437 41)" stroke-linejoin="round" stroke-linecap="round"><path d="M22.5 4.3 C14 -1.5 2.6 3 2.1 12.6 C2 17 3.6 20 5.9 22.4" fill="none" stroke="#000" stroke-width="1.3"/><path d="M12.1 16 h7.6 M15.9 12.2 v7.6" stroke="#e00" stroke-width="1.8"/></g>
<g transform="translate(469 41)" stroke-linejoin="round" stroke-linecap="round"><path d="M1 18.3 L6.1 10.7 L14.5 6.9 L24 7.7" fill="none" stroke="#000" stroke-width="1.2" /><circle cx="1" cy="18.3" r="2.5" fill="#f00" stroke="#400" stroke-width="0.7"/><circle cx="6.1" cy="10.7" r="2.5" fill="#f00" stroke="#400" stroke-width="0.7"/><circle cx="14.5" cy="6.9" r="2.5" fill="#f00" stroke="#400" stroke-width="0.7"/><circle cx="23.6" cy="7.7" r="2.5" fill="#f00" stroke="#400" stroke-width="0.7"/></g>
<g transform="translate(501 41)" stroke-linejoin="round" stroke-linecap="round"><path d="M3.8 4.9 L14.6 3 L15.9 10 L8.9 16.4 L1.9 13.2 Z" fill="#fff" stroke="#000" stroke-width="0.9" /><path d="M3.8 4.9 L10 9.5 L14.6 3 L10 9.5 L8.9 16.4 L10 9.5 L15.9 10" fill="none" stroke="#000" stroke-width="0.6" /><path d="M15.9 10 L23.6 14.5 L19.1 20.2 L9.5 17.7 Z" fill="#f4400a" stroke="#000" stroke-width="0.8" /><path d="M15.9 10 L19.1 20.2" fill="none" stroke="#000" stroke-width="0.6" /><path d="M0.6 12.2 L4.2 11.8 L2.8 15 Z" fill="#000" stroke="#000" stroke-width="0.3" /><path d="M2.6 14.2 L6 17 L9.5 17.7" fill="none" stroke="#000" stroke-width="1.2" /></g>
<g transform="translate(533 41)" stroke-linejoin="round" stroke-linecap="round"><path d="M1.1 14.4 L12 20.6 L22.8 14.4 L22.8 16.8 L12 23 L1.1 16.8 Z" fill="#fff" stroke="#000" stroke-width="0.8" /><path d="M1.1 11.6 L12 17.8 L22.8 11.6 L22.8 14 L12 20.2 L1.1 14 Z" fill="#fff" stroke="#000" stroke-width="0.8" /><path d="M2.6 9.6 L12 15 L22.8 8.6 L22.8 12 L12 18 L2.6 12.6 Z" fill="#e8404a" stroke="#000" stroke-width="0.6" /><path d="M1.1 6.9 L12 0.5 L22.8 5.6 L12 12.6 Z" fill="#fff" stroke="#000" stroke-width="0.9" /></g>
<g transform="translate(565 41)" stroke-linejoin="round" stroke-linecap="round"><path d="M10 16.4 L16.9 20.4 L23.3 16.4 L23.3 18.2 L16.9 22.4 L10 18.2 Z" fill="#c8c8c8" stroke="#999" stroke-width="0.5" /><path d="M10 13.4 L16.9 17.6 L23.3 13.4 L23.3 15.6 L16.9 19.8 L10 15.6 Z" fill="#74b566" stroke="#4a8040" stroke-width="0.4" /><path d="M10 10.8 L16.9 15 L23.3 10.8 L23.3 13 L16.9 17.2 L10 13 Z" fill="#f0b45e" stroke="#b88030" stroke-width="0.4" /><path d="M10 8.2 L16.9 12.4 L23.3 8.2 L23.3 10.4 L16.9 14.6 L10 10.4 Z" fill="#c78ae6" stroke="#9060b0" stroke-width="0.4" /><path d="M10 5.6 L16.9 9.8 L23.3 5.6 L23.3 7.8 L16.9 12 L10 7.8 Z" fill="#4fd2e4" stroke="#2a9aa8" stroke-width="0.4" /><path d="M10 5 L16.9 0.6 L23.3 5 L16.9 9.2 Z" fill="#fff" stroke="#000" stroke-width="0.8" /><path d="M0.7 13.9 L7.1 10.7 L12.9 14.5 L7.1 18.3 Z" fill="#fff" stroke="#aaa" stroke-width="0.6" /><path d="M4.4 10.6 C4 6 6.6 3.6 10.4 3.6" fill="none" stroke="#e8202a" stroke-width="1.8"/><path d="M2 8.4 L7 8.8 L4.2 12 Z" fill="#e8202a" stroke="none" stroke-width="0" /></g>
<g transform="translate(597 41)" stroke-linejoin="round" stroke-linecap="round"><path d="M1.3 20.9 L23.6 6.2" fill="none" stroke="#000" stroke-width="1.3" /><path d="M0 2.1 L12.1 13.9" fill="none" stroke="#f00" stroke-width="1.3" /><path d="M12.1 7.6 L14.6 10.2 L12.1 12.6 L9.6 10.2 Z" fill="#fff" stroke="#000" stroke-width="0.8" /><circle cx="12.1" cy="14.5" r="2.2" fill="#f00" stroke="#000" stroke-width="0.8"/></g>
<g transform="translate(629 41)" stroke-linejoin="round" stroke-linecap="round"><path d="M1.2 19 L7.5 17.8 L12.6 22.8 L5.6 22.4 Z" fill="#555" stroke="none" stroke-width="0" /><path d="M1.2 8.8 L15.8 0.5 L23.5 8.1 L22.6 17.5" fill="none" stroke="#000" stroke-width="1" stroke-dasharray="2.4 1.6"/><path d="M1.2 8.8 L3.6 16" fill="none" stroke="#000" stroke-width="1" stroke-dasharray="2.4 1.6"/><path d="M7.5 10 L13.9 6.2 L20.9 9.4 L21.8 17.7 L14.5 22.4 L7.5 18.1 Z" fill="#fff" stroke="#000" stroke-width="1.2" /></g>
<g transform="translate(661 41)" stroke-linejoin="round" stroke-linecap="round"><path d="M2.3 10 L2.3 14.6 L6.1 20 L6.1 15.8 Z" fill="#fff" stroke="#000" stroke-width="0.9" /><path d="M6.1 15.8 L6.1 20 L11.2 17.4 L16.3 20.6 L23.4 16.8 L23.4 12.6 L16.3 16.4 L11.2 13.2 Z" fill="#ddd" stroke="#000" stroke-width="0.9" /><path d="M2.3 10 L13.2 4.3 L23.4 12.6 L16.3 16.4 L11.2 13.2 L6.1 15.8 Z" fill="#fff" stroke="#000" stroke-width="1" /><path d="M0.4 2.4 L0.4 16.4 L6.1 20" fill="none" stroke="#000" stroke-width="0.9" /><path d="M13.2 2 L13.2 4.3" fill="none" stroke="#000" stroke-width="0.9" /><path d="M0.4 2.4 L2.3 10" fill="none" stroke="#000" stroke-width="0.7" /></g>
<g transform="translate(693 41)" stroke-linejoin="round" stroke-linecap="round"><path d="M14 16 L24 9 L24 15 L15 20.6 Z" fill="#9a9a9a" stroke="none" stroke-width="0" /><path d="M1.6 11.3 L7.9 4.3 L14.3 5.6 L20 1.8 L23.6 3 L23.2 10.7 L17.5 14.5 L11.1 13.2 L6 17.7 L1.6 16.4 Z" fill="#fff" stroke="#000" stroke-width="1.1" /><path d="M1.6 11.3 L6 12.6 L6 17.7" fill="none" stroke="#000" stroke-width="0.9" /><path d="M6 12.6 L11.4 7.6 L17.5 9 L23.6 3" fill="none" stroke="#000" stroke-width="0.8" /><path d="M17.5 9 L17.5 14.5" fill="none" stroke="#000" stroke-width="0.8" /><path d="M0.3 23.4 L6 14.5" fill="none" stroke="#f00" stroke-width="1.2" /><path d="M9.6 12 L18.6 10.8" fill="none" stroke="#f00" stroke-width="1" stroke-dasharray="2 1.4"/></g>
<g transform="translate(725 41)" stroke-linejoin="round" stroke-linecap="round"><path d="M0.2 8.6 L8 8.2 L12 11.6 L5 10.6 Z" fill="#999" stroke="none" stroke-width="0" /><path d="M4 1.8 C14 0.6 22.4 8 20.6 21 L16.2 20.4 C17.6 11 12.6 6.4 5.6 6.2 Z" fill="#dcdcdc" stroke="#222" stroke-width="0.9"/><path d="M4.8 4 C14 3.4 20 10 18.6 20.8" fill="none" stroke="#c03050" stroke-width="0.7"/><path d="M4.4 2.8 C15 2 21.4 9 19.6 21" fill="none" stroke="#5050d0" stroke-width="0.6"/><ellipse cx="18.4" cy="20.8" rx="2.3" ry="1" fill="#bbb" stroke="#222" stroke-width="0.7"/></g>
<g transform="translate(757 41)" stroke-linejoin="round" stroke-linecap="round"><path d="M0.9 4.9 L0.4 16.4 L10.2 21.5 L23.6 15.1 L13.2 4.3 L7 7.9 Z" fill="#fff" stroke="#000" stroke-width="1.1" /><path d="M0.9 10.7 L8.9 13.9 L16.6 9.4" fill="none" stroke="#000" stroke-width="0.8" /><path d="M7 7.9 L8.9 13.9 L10.2 21.5" fill="none" stroke="#000" stroke-width="0.8" /><path d="M0.9 4.9 L7 1.8 L13.2 4.3 L7 7.9 Z" fill="#fff" stroke="#f00" stroke-width="1.3" /><path d="M0.9 4.9 L13.2 4.3" fill="none" stroke="#f00" stroke-width="0.8" /></g>
<g transform="translate(789 41)" stroke-linejoin="round" stroke-linecap="round"><path d="M0.6 14 L5 9 L5 23.4 L1.4 21.6 Z" fill="#9a9490" stroke="none" stroke-width="0" /><path d="M13.3 8.1 L23.5 4.3 L23.5 16.4 L15.8 19.6 Z" fill="#fff" stroke="#000" stroke-width="1.3" /><path d="M16.4 11 L23.5 8.6 L23.5 16.4 L16.4 19.2 Z" fill="#c6dbe4" stroke="#000" stroke-width="0.7" /><path d="M13.3 8.1 L16.4 11 L16.4 19.2" fill="none" stroke="#000" stroke-width="1.1" /><path d="M5 10 L12.7 0.5 L12 14.5 L5 23.4 Z" fill="#fff" stroke="#000" stroke-width="1" /><path d="M5.9 16.4 L10.1 10 L10.5 13.9 L6.3 20.2 Z" fill="#fff" stroke="#f00" stroke-width="1.2" /></g>
<g transform="translate(821 41)" stroke-linejoin="round" stroke-linecap="round"><path d="M0.4 5.6 L6 4.6 L9 12 L5.4 21 L1.4 20 Z" fill="#8a8878" stroke="none" stroke-width="0" /><path d="M5.5 12 C6 6.4 11 4.4 13.6 4.6 C19 3.6 24 8 24 13 C24 18 20 22.6 17 22.8 C15 21 13.4 19.8 10 20.4 C7 20.8 5 17 5.5 12 Z" fill="#fff" stroke="#000" stroke-width="1.1"/><ellipse cx="14" cy="4.2" rx="6.6" ry="4" fill="#c4cfe6" stroke="#000" stroke-width="1.1"/><path d="M9 14 C10 10 13 8 17.6 8.4 M7.6 19 C9 16 11 15 13 15.4" fill="none" stroke="#000" stroke-width="0.9"/><path d="M14.4 19.4 L17 22.8 L16 16 Z" fill="#777" stroke="none" stroke-width="0" /><path d="M13.4 5.6 L13.4 19" fill="none" stroke="#f00" stroke-width="1.4" /></g>
<g transform="translate(853 41)" stroke-linejoin="round" stroke-linecap="round"><path d="M0.2 19.4 L3.6 17.6 L8 22.2 L3 22.4 Z" fill="#9a9a8a" stroke="none" stroke-width="0" /><path d="M0.3 6.9 L6.7 0.5 L18.8 4.9 L19.4 15.1 L8 22.2 L0.3 19.6 Z" fill="#fff" stroke="#000" stroke-width="1" /><path d="M0.3 6.9 L13 10.9 L18.8 4.9" fill="none" stroke="#000" stroke-width="0.8" /><path d="M13 10.9 L8 22.2" fill="none" stroke="#000" stroke-width="0.8" /><path d="M13 10.9 L19.4 15.1" fill="none" stroke="#000" stroke-width="0.8" /><path d="M19.4 9.6 L23.9 13.2 L19.4 16.4 Z" fill="#000" stroke="#000" stroke-width="0.4" /><circle cx="13" cy="10.9" r="1.9" fill="#f00" stroke="#600" stroke-width="0.5"/></g>
<g transform="translate(885 41)" stroke-linejoin="round" stroke-linecap="round"><path d="M2.8 23.4 L2.8 12.4" fill="none" stroke="#000" stroke-width="2" /><path d="M2.8 12.4 C3 6 7 2.6 12.3 2.4" fill="none" stroke="#f00" stroke-width="1.8"/><path d="M12.3 2.4 L23.8 2.4" fill="none" stroke="#000" stroke-width="2" /><path d="M2.8 10 L2.8 2.4 L10 2.4" fill="none" stroke="#000" stroke-width="0.7" stroke-dasharray="1.6 1.4"/></g>
<g transform="translate(917 41)" stroke-linejoin="round" stroke-linecap="round"><path d="M1.4 23.4 L1.4 12.6" fill="none" stroke="#000" stroke-width="2" /><path d="M1.4 12.6 L12.2 1.8" fill="none" stroke="#f00" stroke-width="1.6" /><path d="M12.2 1.8 L23.7 1.8" fill="none" stroke="#000" stroke-width="1.6" /><path d="M1.4 10 L1.4 1.8 L10 1.8" fill="none" stroke="#000" stroke-width="0.8" stroke-dasharray="2.6 1.2 0.8 1.2"/></g>
<g transform="translate(949 41)" stroke-linejoin="round" stroke-linecap="round"><path d="M0.2 20.2 L14.6 8.8" fill="none" stroke="#f00" stroke-width="1.3" /><path d="M14.6 8.8 L23.5 1.8" fill="none" stroke="#000" stroke-width="1.5" /><path d="M5.3 16 L16.5 16" fill="none" stroke="#f00" stroke-width="1.2" /><path d="M16.5 16 L23.5 16.3" fill="none" stroke="#000" stroke-width="1.4" /><circle cx="5.3" cy="16" r="2" fill="#e00" stroke="#000" stroke-width="0.8"/></g>
<g transform="translate(981 41)" stroke-linejoin="round" stroke-linecap="round"><path d="M1 9.4 L6.8 19.6 L23.9 24 L23.9 20 L8.1 15 Z" fill="#8a9090" stroke="none" stroke-width="0" /><path d="M4.3 5.6 L13.2 0.2 L24 1.8 L24 19.6 L8.1 13.9 Z" fill="#fff" stroke="#000" stroke-width="1.2" /><path d="M0.5 7.5 L6.2 17.7 L23.6 22.8" fill="none" stroke="#f00" stroke-width="2.2" /></g>
<g transform="translate(1013 41)" stroke-linejoin="round" stroke-linecap="round"><path d="M0.4 14.6 L4.4 13 L5.4 23.4 L1 22 Z" fill="#8a8a8a" stroke="none" stroke-width="0" /><path d="M4.2 4.3 L14.4 0.7 L24 1.8 L23.3 23.4 L5.4 23.4 Z" fill="#fff" stroke="#000" stroke-width="1.2" /><path d="M4.2 4.3 L12 7 L24 5" fill="none" stroke="#000" stroke-width="0.9" /><path d="M12 7 L11 23.4" fill="none" stroke="#000" stroke-width="0.9" /><path d="M8 6 L8.6 23.4" fill="none" stroke="#000" stroke-width="0.8" /><path d="M14.6 6.8 L18 23.4 L21 6" fill="none" stroke="#000" stroke-width="0.8" /><path d="M4.2 12.6 L6.7 17.7 L19.5 17.7 L24 16" fill="none" stroke="#f00" stroke-width="1.8" /></g>
<g transform="translate(1045 41)" stroke-linejoin="round" stroke-linecap="round"><path d="M6.6 0.7 L0.9 13.9 L7.2 22.4 L23.2 19.6 L16.2 10 Z" fill="#dadad4" stroke="#000" stroke-width="0.9" /><path d="M6.6 0.7 L6.6 12.6 L0.9 13.9" fill="none" stroke="#000" stroke-width="0.7" /><path d="M6.6 12.6 C11 12.4 15 14.6 16.8 18.6" fill="none" stroke="#3040f0" stroke-width="1"/><path d="M0.9 13.9 L7.2 22.4 L17.7 20.4" fill="#fff" stroke="#000" stroke-width="0.8" /><path d="M6.6 0.7 L16.2 10 L17.7 19.6" fill="none" stroke="#f00" stroke-width="1.6" /></g>
<g transform="translate(1077 41)" stroke-linejoin="round" stroke-linecap="round"><path d="M9 1.8 L2.7 21.5 L22.6 16.4" fill="none" stroke="#000" stroke-width="0.8" stroke-dasharray="2 1.4"/><path d="M7.1 9.4 L14.1 4.3 L23.7 12.6 L16.1 17.7 Z" fill="#fff" stroke="#000" stroke-width="1.2" /><path d="M5.9 16.4 L9.7 13.9 L12.9 16.4 L9.4 19.4 Z" fill="#e01010" stroke="#000" stroke-width="0.7" /><path d="M0 21.8 h4 M2 19.8 v4" stroke="#f00" stroke-width="1"/></g>
<g transform="translate(1109 41)" stroke-linejoin="round" stroke-linecap="round"><path d="M0.4 17 L3.4 15.6 L4 22.6 L1 20.6 Z" fill="#8f8f8f" stroke="none" stroke-width="0" /><path d="M10 15.6 L12.4 14.6 L12.4 19.6 L10.4 18.6 Z" fill="#8f8f8f" stroke="none" stroke-width="0" /><path d="M3.4 9.299999999999999 L6.15 8.1 L8.9 9.299999999999999 L8.9 21.6 L6.15 22.8 L3.4 21.6 Z" fill="#fff" stroke="#000" stroke-width="0.9" /><path d="M12.1 4.9 L14.8 3.7 L17.5 4.9 L17.5 17.8 L14.8 19 L12.1 17.8 Z" fill="#fff" stroke="#000" stroke-width="0.9" /><path d="M19.1 1.7 L21.35 0.5 L23.6 1.7 L23.6 15.2 L21.35 16.4 L19.1 15.2 Z" fill="#fff" stroke="#000" stroke-width="0.9" /><path d="M0.8 22.6 L3.6 21" fill="none" stroke="#000" stroke-width="0.8" /></g>
<g transform="translate(1141 41)" stroke-linejoin="round" stroke-linecap="round"><path d="M8.1 1.4 L9.6 0.6 L11.1 1.4 L11.1 11.2 L9.6 12 L8.1 11.2 Z" fill="#fff" stroke="#000" stroke-width="0.8" /><path d="M13.1 3.4000000000000004 L14.6 2.6 L16.1 3.4000000000000004 L16.1 13.2 L14.6 14 L13.1 13.2 Z" fill="#fff" stroke="#000" stroke-width="0.8" /><path d="M4.1 4.4 L5.6 3.6 L7.1 4.4 L7.1 14.2 L5.6 15 L4.1 14.2 Z" fill="#fff" stroke="#000" stroke-width="0.8" /><path d="M17.1 6.8 L18.6 6 L20.1 6.8 L20.1 16.599999999999998 L18.6 17.4 L17.1 16.599999999999998 Z" fill="#fff" stroke="#000" stroke-width="0.8" /><path d="M0.5 7.8 L2 7 L3.5 7.8 L3.5 17.8 L2 18.6 L0.5 17.8 Z" fill="#fff" stroke="#000" stroke-width="0.8" /><path d="M9.5 8.4 L11 7.6 L12.5 8.4 L12.5 18.8 L11 19.6 L9.5 18.8 Z" fill="#fff" stroke="#000" stroke-width="0.8" /><path d="M14.1 10.8 L15.6 10 L17.1 10.8 L17.1 20.8 L15.6 21.6 L14.1 20.8 Z" fill="#fff" stroke="#000" stroke-width="0.8" /><path d="M5.5 10.8 L7 10 L8.5 10.8 L8.5 21.2 L7 22 L5.5 21.2 Z" fill="#fff" stroke="#000" stroke-width="0.8" /><path d="M19.1 10.4 L20.6 9.6 L22.1 10.4 L22.1 18.2 L20.6 19 L19.1 18.2 Z" fill="#fff" stroke="#000" stroke-width="0.8" /><path d="M9.9 12.8 L11.4 12 L12.9 12.8 L12.9 22.599999999999998 L11.4 23.4 L9.9 22.599999999999998 Z" fill="#fff" stroke="#000" stroke-width="0.8" /></g>
<g transform="translate(1173 41)" stroke-linejoin="round" stroke-linecap="round"><ellipse cx="12.5" cy="19" rx="9" ry="4.4" fill="#fff" stroke="#000" stroke-width="0.9"/><path d="M2.3 9.6 L4.9 9.6 L4.9 18 L2.3 18 Z" fill="#eee" stroke="#000" stroke-width="0.7" /><path d="M4.9 6 L7.5 6 L7.5 16 L4.9 16 Z" fill="#eee" stroke="#000" stroke-width="0.7" /><path d="M7.7 3.6 L10.3 3.6 L10.3 15.2 L7.7 15.2 Z" fill="#eee" stroke="#000" stroke-width="0.7" /><path d="M10.7 2.2 L13.3 2.2 L13.3 14.8 L10.7 14.8 Z" fill="#eee" stroke="#000" stroke-width="0.7" /><path d="M13.7 2 L16.3 2 L16.3 15 L13.7 15 Z" fill="#eee" stroke="#000" stroke-width="0.7" /><path d="M16.7 3.4 L19.3 3.4 L19.3 15.8 L16.7 15.8 Z" fill="#eee" stroke="#000" stroke-width="0.7" /><path d="M19.3 5.6 L21.900000000000002 5.6 L21.900000000000002 17 L19.3 17 Z" fill="#eee" stroke="#000" stroke-width="0.7" /><path d="M21.3 8.6 L23.900000000000002 8.6 L23.900000000000002 19 L21.3 19 Z" fill="#eee" stroke="#000" stroke-width="0.7" /><path d="M1 13 L3 13 L3 14.4 L1 14.4 Z" fill="#999" stroke="none" stroke-width="0" /><path d="M1 15.6 L3 15.6 L3 17 L1 17 Z" fill="#999" stroke="none" stroke-width="0" /></g>
<g transform="translate(1205 41)" stroke-linejoin="round" stroke-linecap="round"><rect x="1.4" y="15.4" width="3" height="7" fill="#aaa" stroke="#222" stroke-width="0.8" transform="rotate(8 2.9 18.9)"/><rect x="5.6" y="14.6" width="3" height="7.4" fill="#aaa" stroke="#222" stroke-width="0.8" transform="rotate(-12 7.1 18.3)"/><rect x="9.4" y="12.6" width="3.4" height="6.6" fill="#aaa" stroke="#222" stroke-width="0.8" transform="rotate(-28 11.1 15.899999999999999)"/><rect x="12.4" y="9" width="4.4" height="5.6" fill="#aaa" stroke="#222" stroke-width="0.8" transform="rotate(-50 14.600000000000001 11.8)"/><rect x="15.4" y="5.2" width="5" height="4.6" fill="#aaa" stroke="#222" stroke-width="0.8" transform="rotate(-62 17.9 7.5)"/><rect x="16.6" y="1.2" width="6.4" height="4.4" fill="#aaa" stroke="#222" stroke-width="0.8" transform="rotate(10 19.8 3.4000000000000004)"/></g>
<g transform="translate(1237 41)" stroke-linejoin="round" stroke-linecap="round"><path d="M1.2 14.5 L8.4 10 L8.4 22.6 Z" fill="#8f8f8f" stroke="none" stroke-width="0" /><path d="M8.4 6.9 L12.6 4.4 L17.6 5.6 L23.7 1.1 L23.7 14.5 L17.6 18.4 L12.6 17 L8.4 23.4 Z" fill="#fff" stroke="#000" stroke-width="1.4" /><path d="M12.6 4.4 L12.6 17" fill="none" stroke="#888" stroke-width="0.6" /><path d="M17.6 5.6 L17.6 18.4" fill="none" stroke="#888" stroke-width="0.6" /></g>
<g transform="translate(1269 41)" stroke-linejoin="round" stroke-linecap="round"><path d="M0 12.6 L12.8 6.2 L14.1 22.8 L11 20 Z" fill="#8f8f8f" stroke="none" stroke-width="0" /><path d="M12.8 6.2 L21.7 1.1 L23.6 15.8 L14.1 22.8 Z" fill="#fff" stroke="#000" stroke-width="1.6" /><path d="M16.4 9.6 L19.2 8.2 L19.6 14 L16.8 15.6 Z" fill="#333" stroke="#000" stroke-width="0.5" /></g>
<g transform="translate(1301 41)" stroke-linejoin="round" stroke-linecap="round"><path d="M0.4 0.6 L7.6 1.6 L7.6 15.6 L0.4 9.6 Z" fill="#8f8f8f" stroke="none" stroke-width="0" /><path d="M7.6 0.6 L20 2.2 L24 0.6 L24 5.199999999999999 L20 7.6 L7.6 5.0 Z" fill="#fff" stroke="#000" stroke-width="1" /><path d="M7.6 2.6 L20 4.6 L24 2.6" fill="none" stroke="#666" stroke-width="0.7" /><path d="M7.6 6.4 L20 8.0 L24 6.4 L24 11.0 L20 13.4 L7.6 10.8 Z" fill="#fff" stroke="#000" stroke-width="1" /><path d="M7.6 8.4 L20 10.4 L24 8.4" fill="none" stroke="#666" stroke-width="0.7" /><path d="M7.6 12.2 L20 13.799999999999999 L24 12.2 L24 16.799999999999997 L20 19.2 L7.6 16.6 Z" fill="#fff" stroke="#000" stroke-width="1" /><path d="M7.6 14.2 L20 16.2 L24 14.2" fill="none" stroke="#666" stroke-width="0.7" /></g>
<g transform="translate(1333 41)" stroke-linejoin="round" stroke-linecap="round"><path d="M0.4 8.8 L4 8.4 L11 18.6 L10.6 21 Z" fill="#8f8f8f" stroke="none" stroke-width="0" /><path d="M10.7 3 L16.3 3 L15.6 20 L13.5 23.2 L11.4 20 Z" fill="#ddd" stroke="#000" stroke-width="0.9" /><path d="M12.6 4 L12.8 20" fill="none" stroke="#555" stroke-width="0.8" /><path d="M14.6 4 L14.4 20" fill="none" stroke="#888" stroke-width="0.8" /><path d="M7.6 0.9 L19.4 0.9 L19 2.4 L16.6 3.4 L10.4 3.4 L8 2.4 Z" fill="#333" stroke="#000" stroke-width="0.6" /></g>
<g transform="translate(1365 41)" stroke-linejoin="round" stroke-linecap="round"><path d="M1.7 15.1 L11.1 11.9 L21.4 14.3 L21.4 17 L14.3 22.6 L1.7 17.8 Z" fill="#e6e6e6" stroke="#555" stroke-width="0.8" /><path d="M1.7 15.1 L14.3 19.8 L21.4 14.3" fill="none" stroke="#555" stroke-width="0.8" /><path d="M14.3 19.8 L14.3 22.6" fill="none" stroke="#555" stroke-width="0.8" /><path d="M7.2 1.2 L11.6 0.4 L15.9 1.2 L15.9 15.1 L11.6 16.6 L7.2 15.1 Z" fill="#d4d4d4" stroke="#444" stroke-width="0.8" /><path d="M11.6 2 L11.6 16.6" fill="none" stroke="#777" stroke-width="0.7" /></g>
<g transform="translate(1397 41)" stroke-linejoin="round" stroke-linecap="round"><path d="M3 19.8 L22 19.8" fill="none" stroke="#777" stroke-width="0.8" /><g transform="rotate(49 7.6 8.8)"><rect x="-1.6" y="7.2" width="18" height="3.2" rx="0.6" fill="#fff" stroke="#000" stroke-width="1.1"/><path d="M0 8.8 H15" stroke="#f00" stroke-width="0.9"/></g><g transform="rotate(-45 14.3 13)"><rect x="3.6" y="11.2" width="21" height="3.6" rx="0.8" fill="#fff" stroke="#000" stroke-width="1.2"/><path d="M5 13 H23" stroke="#f00" stroke-width="1"/></g></g>
<g transform="translate(1429 41)" stroke-linejoin="round" stroke-linecap="round"><path d="M0.1 4.8 L4 4.8 L4 7.7 L11.2 7.7 L11.2 10.4 L23.8 10.4" fill="none" stroke="#000" stroke-width="1" /><path d="M0.1 8 L8.8 14.3" fill="none" stroke="#000" stroke-width="1" /><path d="M9.6 12.8 L16 12.8" fill="none" stroke="#000" stroke-width="2" /><path d="M23.8 12 L0.1 23" fill="none" stroke="#000" stroke-width="1" /><path d="M0.1 18.3 L4 18.3 L4 16 L8.8 16 L8.8 14.3 L14 13.6" fill="none" stroke="#000" stroke-width="0.9" /></g>
<g transform="translate(1461 41)" stroke-linejoin="round" stroke-linecap="round"><path d="M-0.2 19 L13.2 0.4 L23.8 0.4 L23.8 23 L-0.2 23 Z" fill="#8a8a8a" stroke="none" stroke-width="0" /><path d="M2 19.6 L14.6 1.6" fill="none" stroke="#444" stroke-width="1.6" /><path d="M6 21 L18.6 2" fill="none" stroke="#cfcfcf" stroke-width="1.8" /><path d="M10.4 21.6 L22.6 3" fill="none" stroke="#444" stroke-width="1.6" /><path d="M15 22.4 L23.8 9" fill="none" stroke="#bbb" stroke-width="1.4" /><path d="M-0.2 21.6 L5 23" fill="none" stroke="#fff" stroke-width="1.4" /></g>
<g transform="translate(1493 41)" stroke-linejoin="round" stroke-linecap="round"><path d="M1.8 18.3 L19.2 15.1 L22 16.6 L4.8 20.6 Z" fill="#bdbdbd" stroke="#888" stroke-width="0.6" /><path d="M6.5 4 L21.5 0.1 L21.5 14.3 L7.3 18.3 Z" fill="none" stroke="#7a7a7a" stroke-width="2.6" /><path d="M8.6 6 L19.6 3 L19.6 12.6 L9 15.6 Z" fill="none" stroke="#b5b5b5" stroke-width="1" /></g>
<g transform="translate(1525 41)" stroke-linejoin="round" stroke-linecap="round"><path d="M2.6 19.6 L7.7 18.6 L9.6 23.2 L4.4 23.2 Z" fill="#bdbdbd" stroke="#999" stroke-width="0.6" /><path d="M7.7 23 L7.7 5.6 L21.2 0.9 L21.2 18.3" fill="none" stroke="#808080" stroke-width="2.8" /><path d="M10 22 L10 7.6 L19 4.4" fill="none" stroke="#bcbcbc" stroke-width="1" /></g>
<g transform="translate(1557 41)" stroke-linejoin="round" stroke-linecap="round"><path d="M0.6 3 L6 0.6 L6 22.6 L0.6 23 Z" fill="#777" stroke="#000" stroke-width="0.8" /><path d="M3.6 3 L6 2.4 L6 22.6 L3.6 22.8 Z" fill="#334a9a" stroke="none" stroke-width="0" /></g>
<path d="M13.8 127.8 L13.8 139.2 L16.5 136.8 L18.6 141.4 L20.5 140.5 L18.4 136 L21.8 135.7 Z" fill="#0f3f6b"/>
<path d="M50 126.5 C56 126 58.5 131 55.5 136 C52.5 140.5 45 143.5 41.5 143.8 C44 141.5 43.5 139 42 136.5 C40 133 42 129.5 45 128.5" fill="none" stroke="#1b8fd6" stroke-width="1.2" stroke-dasharray="2.2 1.4"/>
<path d="M44 123 L44 132.6 L46.3 130.6 L48.1 134.4 L49.8 133.6 L48 129.8 L51 129.5 Z" fill="#0f3f6b"/>
<path d="M10.5 164 L17.5 157 Q19 155.8 20.5 157 L26.2 163.5 Q27.3 165 26.2 166.6 L20.2 173.6 Q18.8 175 17.2 173.8 L10.6 167.4 Q9.4 165.6 10.5 164 Z" fill="#dcebf8" stroke="#0f3f6b" stroke-width="1.3"/>
<ellipse cx="20.5" cy="161.5" rx="5.6" ry="3.6" transform="rotate(-35 20.5 161.5)" fill="none" stroke="#0f3f6b" stroke-width="1.1"/>
<path d="M16.5 157.2 C11 158.5 7.6 163.5 7.8 171.5 C8 173.5 10 173.2 10.2 171 C10.5 166 12.5 162 17.5 159.5 Z" fill="#1b8fd6"/>
<g transform="rotate(-43 49 166)"><rect x="39.5" y="161" width="19" height="10.4" rx="0.8" fill="#dcebf8" stroke="#0f3f6b" stroke-width="1.3"/><rect x="45.4" y="161.6" width="6.6" height="9.2" fill="#1b8fd6"/></g>
<rect x="41" y="175.2" width="18.4" height="1.6" fill="#5cb3e2"/>
<path d="M17.9 190.4 L21.68 192.5 L21.68 196.7 L17.9 198.79999999999998 L14.119999999999997 196.7 L14.119999999999997 192.5 Z" fill="#dcebf8" stroke="#0f3f6b" stroke-width="1.1"/><path d="M14.119999999999997 192.5 L17.9 194.6 L21.68 192.5 M17.9 194.6 V198.79999999999998" fill="none" stroke="#0f3f6b" stroke-width="0.9"/>
<path d="M13.9 198.0 L17.68 200.1 L17.68 204.29999999999998 L13.9 206.39999999999998 L10.120000000000001 204.29999999999998 L10.120000000000001 200.1 Z" fill="#dcebf8" stroke="#0f3f6b" stroke-width="1.1"/><path d="M10.120000000000001 200.1 L13.9 202.2 L17.68 200.1 M13.9 202.2 V206.39999999999998" fill="none" stroke="#0f3f6b" stroke-width="0.9"/>
<path d="M21.9 198.0 L25.68 200.1 L25.68 204.29999999999998 L21.9 206.39999999999998 L18.119999999999997 204.29999999999998 L18.119999999999997 200.1 Z" fill="#dcebf8" stroke="#0f3f6b" stroke-width="1.1"/><path d="M18.119999999999997 200.1 L21.9 202.2 L25.68 200.1 M21.9 202.2 V206.39999999999998" fill="none" stroke="#0f3f6b" stroke-width="0.9"/>
<path d="M42.6 201 L52.6 191.8 L59.6 198.6 L49.4 208.4 L42.6 208.4 Z" fill="#dcebf8" stroke="#0f3f6b" stroke-width="1.4" stroke-linejoin="round"/><circle cx="46.3" cy="205" r="1.1" fill="none" stroke="#1b8fd6" stroke-width="0.9"/>
<path d="M12.6 239.2 L24.4 227.6 L27.2 230.4 L15.2 242 Z" fill="#fff" stroke="#ff0000" stroke-width="1.4"/><path d="M8.2 245.8 L12.2 238.6 L15.6 242 Z" fill="#0f3f6b"/>
<path d="M42.5 243 C44 236 50 240 53 244 C56 247.5 57.5 242 52.5 238 C47 233.5 43 231 46 230 C50 229 52 234 55.5 230.2" fill="none" stroke="#1b8fd6" stroke-width="1.3"/><circle cx="56.6" cy="229.2" r="2.6" fill="#ff0000"/><circle cx="41.6" cy="244.2" r="2" fill="#0f3f6b"/>
<rect x="10" y="260" width="15" height="17.2" fill="#dcebf8" stroke="#1b8fd6" stroke-width="1.3"/><path d="M10.4 276 L25 260.6" stroke="#0f3f6b" stroke-width="1"/><circle cx="25" cy="260.6" r="2.7" fill="#ff0000"/><circle cx="10.4" cy="276" r="2.2" fill="#0f3f6b"/>
<rect x="43" y="258.4" width="15" height="17.6" fill="#dcebf8" stroke="#4aaee4" stroke-width="1.9"/><path d="M43 264.4 C51 264 57 268 58 276" fill="none" stroke="#0f3f6b" stroke-width="1.3"/><circle cx="42.9" cy="264.4" r="3.2" fill="#ff0000"/><circle cx="42.9" cy="276" r="2.2" fill="#0f3f6b"/><circle cx="58" cy="276" r="2.2" fill="#0f3f6b"/>
<circle cx="17.9" cy="300" r="9.6" fill="#dcebf8" stroke="#1b8fd6" stroke-width="1.4"/><path d="M17.9 300 L25 293" stroke="#0f3f6b" stroke-width="1"/><circle cx="17.9" cy="300" r="2.1" fill="#0f3f6b"/><circle cx="25" cy="293" r="2.6" fill="#ff0000"/>
<path d="M39.2 300 L44.6 290.6 L55.4 290.6 L60.8 300 L55.4 309.4 L44.6 309.4 Z" fill="#dcebf8" stroke="#1b8fd6" stroke-width="1.3"/><path d="M50 300 L54.4 292.4" stroke="#0f3f6b" stroke-width="1"/><circle cx="50" cy="300" r="2.1" fill="#0f3f6b"/><circle cx="54.4" cy="292.4" r="2.6" fill="#ff0000"/>
<path d="M10 325 V340.5 L25.3 325.5" fill="none" stroke="#0f3f6b" stroke-width="1"/><path d="M10 340.5 C19 341 25.5 335 25.3 325.5" fill="none" stroke="#1b8fd6" stroke-width="1.3"/><circle cx="10" cy="325" r="2.1" fill="#0f3f6b"/><circle cx="10" cy="340.5" r="2.1" fill="#0f3f6b"/><circle cx="25.3" cy="325.5" r="2.7" fill="#ff0000"/>
<path d="M43.4 325.9 C48 322.5 53 322.5 57.3 326.2 M43.4 325.9 C40.5 330.5 40.5 336 43.7 340.2" fill="none" stroke="#1b8fd6" stroke-width="1.3"/><path d="M43.7 340.2 L57.3 326.2 M43.4 325.9 L50.4 333.2" stroke="#0f3f6b" stroke-width="1"/><circle cx="43.4" cy="325.9" r="2.7" fill="#ff0000"/><circle cx="57.3" cy="326.2" r="2.1" fill="#0f3f6b"/><circle cx="43.7" cy="340.2" r="2.1" fill="#0f3f6b"/>
<path d="M16 356.1 C25 354 31 363 25.5 370.4 C21 375.5 14 373.5 10.5 366.7" fill="none" stroke="#1b8fd6" stroke-width="1.3"/><path d="M16 356.1 L25.5 370.4 L10.5 366.7" fill="none" stroke="#0f3f6b" stroke-width="1"/><circle cx="16" cy="356.1" r="2.7" fill="#ff0000"/><circle cx="10.5" cy="366.7" r="2.1" fill="#0f3f6b"/><circle cx="25.5" cy="370.4" r="2.1" fill="#0f3f6b"/>
<path d="M42 356.5 H57.4 C57.5 365 51 371.5 42 371.6 Z" fill="#dcebf8"/><path d="M42 356.5 H57.4 M57.4 356.8 C57.5 365 51 371.5 42 371.6" fill="none" stroke="#1b8fd6" stroke-width="1.3"/><path d="M42 356.5 V371.6 L57.4 356.8" fill="none" stroke="#0f3f6b" stroke-width="1.2"/><circle cx="42" cy="356.5" r="2.1" fill="#0f3f6b"/><circle cx="42" cy="371.6" r="2.1" fill="#0f3f6b"/><circle cx="57.4" cy="356.8" r="2.7" fill="#ff0000"/>
<path d="M7.099999999999998 402.2 l4.6 -3.4 v2.2 h3 v2.4 h-3 v2.2 Z M28.7 402.2 l-4.6 -3.4 v2.2 h-3 v2.4 h3 v2.2 Z M17.9 391.4 l-3.4 4.6 h2.2 v3 h2.4 v-3 h2.2 Z M17.9 413.0 l-3.4 -4.6 h2.2 v-3 h2.4 v3 h2.2 Z" fill="#ff0000"/>
<path d="M39.4 402.6 L50 398.6 L61 402.6 L50 408.6 Z" fill="#dcebf8" stroke="#1b8fd6" stroke-width="1.2" stroke-linejoin="round"/><path d="M39.4 402.6 V405.6 L50 412.2 L61 405.6 V402.6 M50 408.6 V412.2" fill="none" stroke="#1b8fd6" stroke-width="1.2" stroke-linejoin="round"/>
<path d="M50 392 L54.2 398 H51.6 V403.4 H48.4 V398 H45.8 Z" fill="#ff0000"/>
<path d="M11 436.5 C10 431 14 427.4 19.5 427.6 M25.4 433.2 C26.4 438.6 22.4 442.4 16.8 442.2" fill="none" stroke="#ff0000" stroke-width="1.5"/><path d="M19 424.8 L24.4 428.6 L19.6 431.6 Z M17.4 445 L12 441.2 L16.8 438.2 Z" fill="#ff0000"/>
<path d="M44 425.4 C40 427.5 38.6 432 41 436.5 L46 443.4 L51.4 439.6 L47 434 C46 431.5 46.6 429.5 48.6 428.6 Z" fill="#dcebf8" stroke="#1b8fd6" stroke-width="1.2" stroke-linejoin="round"/><ellipse cx="48.6" cy="441.4" rx="3.3" ry="1.9" transform="rotate(-35 48.6 441.4)" fill="#dcebf8" stroke="#1b8fd6" stroke-width="1"/><path d="M47.4 426.6 C50 423.6 54.6 424 56.4 427.2" fill="none" stroke="#0f3f6b" stroke-width="1.1"/><circle cx="57.4" cy="429" r="2.5" fill="#ff0000"/>
<rect x="7.6" y="456.6" width="20.8" height="18.8" fill="#dcebf8" stroke="#1b8fd6" stroke-width="1.4"/><path d="M7.8 462.6 H21.4 V475.2" fill="none" stroke="#0f3f6b" stroke-width="1.5"/><path d="M7.8 462.6 V475.2 H21.4" fill="none" stroke="#0f3f6b" stroke-width="1.5"/><path d="M27 457.8 L25.6 465.4 L23.4 463.2 L19.4 467.4 L17.2 465.2 L21.4 461.2 L19.2 459 Z" fill="#ff0000"/>
<path d="M40.6 458.4 C47 453.4 56 455.4 59.6 462.6 C61.4 467 60.6 472 57 475.4" fill="none" stroke="#1b8fd6" stroke-width="1.3"/><path d="M41.4 468.6 C42.6 463.6 48.6 461.4 52.4 464.4 C55.4 467.4 54.6 473 48.6 475.4" fill="none" stroke="#0f3f6b" stroke-width="1.2"/><path d="M60.2 456.8 L58.8 464.4 L56.6 462.2 L53.4 465.6 L51.2 463.4 L54.6 460.2 L52.4 458 Z" fill="#ff0000"/>
<path d="M16.2 498 V490" stroke="#1b8fd6" stroke-width="1.4"/><path d="M15.9 487.6 L18.2 492 H13.6 Z" fill="#1b8fd6"/><path d="M19 498.6 L24 495.2" stroke="#3a9a4a" stroke-width="1.4"/><path d="M27.6 492.8 L25.2 497 L22.6 493.2 Z" fill="#3a9a4a"/><path d="M19.4 502.6 L24.4 505.6" stroke="#ff0000" stroke-width="1.4"/><path d="M27.8 507.6 L22.8 507.4 L25.2 503.4 Z" fill="#ff0000"/><path d="M13.8 498.6 L8.8 495.2" stroke="#ff0000" stroke-width="1.1" stroke-dasharray="1.2 1.2"/><path d="M13.6 502.6 L9 505.6" stroke="#3a9a4a" stroke-width="1.1" stroke-dasharray="1.2 1.2"/><path d="M16.6 504 V509" stroke="#1b8fd6" stroke-width="1.1" stroke-dasharray="1.2 1.2"/><circle cx="16.6" cy="500.5" r="3" fill="#0f3f6b"/>
<path d="M39.6 505.6 L47.8 490.6 V505.6 Z" fill="#fff" stroke="#0f3f6b" stroke-width="1.2" stroke-linejoin="round"/><path d="M60.6 505.6 L52.2 490.6 V505.6 Z" fill="#dcebf8" stroke="#1b8fd6" stroke-width="1.2" stroke-linejoin="round"/><path d="M50 488 V507" stroke="#f05050" stroke-width="1.8" stroke-dasharray="1.6 1"/>
<rect x="11.4" y="527.6" width="12.8" height="12.4" rx="2.4" transform="rotate(-24 17.8 533.8)" fill="#dcebf8" stroke="#0f3f6b" stroke-width="1.3"/><path d="M16 540 L9.8 544 L10.4 546" fill="none" stroke="#0f3f6b" stroke-width="1.1"/><circle cx="17.9" cy="533.9" r="3.2" fill="#ff0000"/>
<path d="M41 536 L52.8 527.6 M40.6 533 L44 538.6 M49.4 526.6 L53 532 M43.6 537 L48 541.6 M52 530 L55.6 534" fill="none" stroke="#0f3f6b" stroke-width="1.1"/><text x="44.4" y="532" font-family="Liberation Sans, sans-serif" font-size="6" fill="#0f3f6b" transform="rotate(-35 44.4 532)">5</text><circle cx="56.6" cy="535.4" r="2.7" fill="#ff0000"/><circle cx="49.5" cy="543" r="2.7" fill="#ff0000"/>
<path d="M12.4 577.4 C7.6 570 12 561 27.4 560.8 Z" fill="#dcebf8" stroke="#0f3f6b" stroke-width="1.5" stroke-linejoin="round"/><path d="M14.6 573.6 C12.4 569 15.6 564.6 22.6 563.6 Z" fill="none" stroke="#0f3f6b" stroke-width="1"/><path d="M12.6 576 L26.6 561.6" stroke="#0f3f6b" stroke-width="2.2" stroke-dasharray="0.8 0.8"/>
<rect x="44.6" y="557.6" width="16" height="14.4" rx="1.2" fill="#fff" stroke="#2f5b86" stroke-width="1.5"/><text x="52.6" y="568.6" text-anchor="middle" font-family="Liberation Serif, serif" font-size="9.5" fill="#2f5b86">A1</text><path d="M44.6 564.2 H41.4 V575" fill="none" stroke="#0f3f6b" stroke-width="1.2"/><path d="M41.4 579 L39 574.2 H43.8 Z" fill="#0f3f6b"/>
<circle cx="18.2" cy="599.7" r="8.2" fill="#fff" stroke="#0f3f6b" stroke-width="1.3"/><path d="M7.2 599.7 H27" stroke="#0f3f6b" stroke-width="1.3"/><path d="M29 599.7 L23.6 594.6 V604.8 Z" fill="#0f3f6b"/><path d="M18.6 590.6 L24 595" stroke="#0f3f6b" stroke-width="1.2"/><text x="17.2" y="597.6" text-anchor="middle" font-family="Liberation Sans, sans-serif" font-size="4.6" fill="#0f3f6b">C</text><text x="17.4" y="605.6" text-anchor="middle" font-family="Liberation Sans, sans-serif" font-size="4.4" fill="#0f3f6b">A-B</text>
<text x="41" y="609" font-family="Liberation Sans, sans-serif" font-weight="bold" font-size="24" fill="#1b8fd6" transform="translate(41 609) skewX(-8) scale(0.8 1) translate(-41 -609)">A</text><path d="M47.4 592 L43 607.6" stroke="#cfe6f6" stroke-width="1.3"/>
<ellipse cx="18.2" cy="637.4" rx="9" ry="4.6" fill="none" stroke="#ff0000" stroke-width="2.6"/><rect x="15.4" y="631" width="5.4" height="4" fill="#f1f0f6"/><path d="M12.6 640.2 L8.6 638.4 L11.4 643.4 Z M19.4 643.8 L23.4 639.6 L24.4 644 Z" fill="#ff0000"/><path d="M17.5 627.8 V646.6" stroke="#0f3f6b" stroke-width="1.2"/>
<path d="M47 646 C44.6 643.6 44 641.4 44.6 640.2 C45.4 639.2 46.6 639.6 47.6 640.6 L47.6 634 C47.8 632.4 49.8 632.4 50 634 L50 638 C51 637.4 52 637.6 52.4 638.6 C53.4 638 54.6 638.4 54.8 639.4 C56 639 57 639.6 57.2 640.8 C57.8 643.6 57.4 645.6 56.2 647.6 L49 647.6 Z" fill="#dcebf8" stroke="#0f3f6b" stroke-width="1.1" stroke-linejoin="round"/><path d="M41.4 631.4 L45.4 628.6 V630.4 H53 V628.6 L57 631.4 L53 634.2 V632.4 H45.4 V634.2 Z" fill="#ff0000"/>
<circle cx="21.4" cy="666.5" r="6" fill="#f1f0f6" stroke="#0f3f6b" stroke-width="1.3"/><path d="M17 671.2 L9.4 679" stroke="#0f3f6b" stroke-width="2.2" stroke-linecap="round"/>
<rect x="40.2" y="660.2" width="20" height="19.6" fill="none" stroke="#1b8fd6" stroke-width="1.8" stroke-dasharray="0.9 1.1"/><circle cx="51.5" cy="667" r="5" fill="#f1f0f6" stroke="#0f3f6b" stroke-width="1.2"/><path d="M47.8 670.8 L41.6 677.4" stroke="#0f3f6b" stroke-width="2" stroke-linecap="round"/>
<circle cx="17.3" cy="701.7" r="4.8" fill="#f1f0f6" stroke="#0f3f6b" stroke-width="1.2"/><path d="M13.8 705.4 L8.4 711.6" stroke="#0f3f6b" stroke-width="1.9" stroke-linecap="round"/>
<path d="M12 696.6 L9.6 694.2 M22.4 696.6 L24.8 694.2 M22.6 706.8 L25 709.2" stroke="#ff0000" stroke-width="2"/><path d="M7.4 691.8 L12.2 692.8 L8.6 696.6 Z M27.8 691.8 L26.8 696.6 L23 692.8 Z M28.2 711.6 L23.4 710.6 L27 706.8 Z" fill="#ff0000"/>
<path d="M41.2 697.4 H43.6 L44.8 694.4 H50.4 L51.6 697.4 H55.4 V705.6 H41.2 Z" fill="none" stroke="#0f3f6b" stroke-width="1.3" stroke-linejoin="round"/><path d="M51 700.2 H55.6 C60.4 700.4 60.4 709 55.6 709.2 H50.4" fill="none" stroke="#ff0000" stroke-width="1.3"/><path d="M48.4 700.2 L52 697.8 V702.6 Z" fill="#ff0000"/>
<rect x="11.4" y="732.4" width="13.2" height="8.2" rx="1" fill="#dcebf8" stroke="#0f3f6b" stroke-width="1.1"/><path d="M14 732.4 V730.8 H17 V732.4 M15.8 740.8 L12.2 749 M20.2 740.8 L23.8 749 M18 740.8 V746" fill="none" stroke="#0f3f6b" stroke-width="1.1"/><ellipse cx="18" cy="749.6" rx="4.6" ry="0.8" fill="#c9c9cf"/><circle cx="18" cy="736.4" r="2.6" fill="#ff0000"/>
<circle cx="49.6" cy="731.4" r="1.9" fill="#0f3f6b"/><path d="M49 734 L51.6 734.4 L52 741.4 L54.6 748.6 L52.6 749.2 L50 743.6 L46.6 749.4 L44.8 748.6 L48 741.6 Z" fill="#0f3f6b"/><path d="M51.6 736.4 L55 739.8" stroke="#0f3f6b" stroke-width="1.1"/><rect x="44.8" y="734.2" width="2.8" height="5.6" rx="0.8" fill="#e8303a"/><path d="M55.8 735 V750" stroke="#1b8fd6" stroke-width="0.9"/><path d="M43.4 750.4 H58.4" stroke="#0f3f6b" stroke-width="0.9"/>
<path d="M12.6 772.4 C15 765.4 25 765.4 27.8 772.6 C25 780.6 15.4 780.6 12.6 772.4 Z" fill="#fff" stroke="#0f3f6b" stroke-width="1.3"/><path d="M12.4 771.6 C15 763.4 26 763.8 28 772 C25 767.4 16 767.4 12.4 771.6 Z" fill="#0f3f6b"/><circle cx="20.4" cy="773.2" r="4.2" fill="#1b8fd6"/><circle cx="20.4" cy="773.2" r="1.7" fill="#d9ecfa"/><path d="M13 770 L8.4 767.4 M12.4 771.6 L8 770.6 M12.6 773 L8.6 773.6" stroke="#0f3f6b" stroke-width="1"/>
<path d="M37.6 772.4 L52.4 764 M37.6 772.4 L52.4 780.6" stroke="#0f3f6b" stroke-width="1.1"/><path d="M52.4 764 L57.6 761 M52.4 780.6 L57.6 783.6" stroke="#0f3f6b" stroke-width="1.1" stroke-dasharray="1.6 1.2"/><path d="M50.8 765.2 C53 770 53 775 50.8 779.6" fill="none" stroke="#0f3f6b" stroke-width="1.1"/><ellipse cx="50.2" cy="772.4" rx="1.8" ry="6.4" fill="none" stroke="#1b8fd6" stroke-width="1"/><path d="M56.4 765.6 C58.4 770 58.4 775 56.4 779.4" fill="none" stroke="#1b8fd6" stroke-width="1.3"/><path d="M56 764.2 L58 767 L55 767.2 Z M56 780.8 L58 778 L55 777.8 Z" fill="#1b8fd6"/>
<path d="M17.4 798.0 L26.6 803.3 L26.6 813.9 L17.4 819.2 L8.2 813.9 L8.2 803.3 Z" fill="none" stroke="#1363a9" stroke-width="1.9"/><path d="M17.8 802.6 L23.9 806.1 L23.9 813.1 L17.8 816.6 L11.7 813.1 L11.7 806.1 Z" fill="none" stroke="#1363a9" stroke-width="1.7"/><path d="M18 806.4 L21.1 808.2 L21.1 811.8 L18 813.6 L14.9 811.8 L14.9 808.2 Z" fill="none" stroke="#1363a9" stroke-width="1.1"/><path d="M18 810 V813.6 M18 810 L14.9 808.2 M18 810 L21.1 808.2" stroke="#1363a9" stroke-width="0.9"/>
<path d="M23.4 811 H28.4 V817 H31.4 L26 822.6 L20.6 817 H23.4 Z" fill="#fff" stroke="#1363a9" stroke-width="1.3" stroke-linejoin="round"/>
<path d="M38.8 801.2 L47.8 805.8000000000001 L55.8 801.8000000000001 L55.8 805.2 L47.8 809.2 L38.8 804.6 Z M38.8 817.8000000000001 L47.8 813.2 L55.8 817.2 L55.8 813.8000000000001 L47.8 809.8000000000001 L38.8 814.4 Z" fill="#1363a9"/><path d="M55.8 801.8000000000001 L58.8 800.2 V803.6 L55.8 805.2 M38.8 817.8000000000001 L42.0 819.6 L47.8 816.6 L52.4 819.0" fill="none" stroke="#1363a9" stroke-width="1.2"/>
<circle cx="56.6" cy="817.4" r="5.6" fill="#f1f0f6" stroke="#1363a9" stroke-width="1.2"/><path d="M53.8 816.4 C54.6 814 58 813.8 59.2 815.8 M59.4 818.6 C58.6 821 55.2 821 54 819.2" fill="none" stroke="#1363a9" stroke-width="1.1"/><path d="M59.8 814.2 V816.6 H57.6 Z M53.4 820.6 V818.4 H55.6 Z" fill="#1363a9"/>
<path d="M9 837.6 L18.6 832.6 L28 837.6 L18.6 842.6 Z" fill="#f1f0f6" stroke="#1363a9" stroke-width="1.7" stroke-linejoin="round"/>
<path d="M9 843.2 L18.6 838.2 L28 843.2 L18.6 848.2 Z" fill="#f1f0f6" stroke="#1363a9" stroke-width="1.7" stroke-linejoin="round"/>
<path d="M9 848.8000000000001 L18.6 843.8000000000001 L28 848.8000000000001 L18.6 853.8000000000001 Z" fill="#f1f0f6" stroke="#1363a9" stroke-width="1.7" stroke-linejoin="round"/>
<path d="M14.6 837.6 L18.6 835.4 L22.6 837.6 L18.6 839.8 Z" fill="none" stroke="#1363a9" stroke-width="1.3"/>
<path d="M21.6 846.6 H27.6 V843.4 L33.6 849.6 L27.6 855.6 V852.6 H21.6 Z" fill="#fff" stroke="#1363a9" stroke-width="1.3" stroke-linejoin="round"/>
<path d="M38.8 832.2 L47.8 836.8000000000001 L55.8 832.8000000000001 L55.8 836.2 L47.8 840.2 L38.8 835.6 Z M38.8 848.8000000000001 L47.8 844.2 L55.8 848.2 L55.8 844.8000000000001 L47.8 840.8000000000001 L38.8 845.4 Z" fill="#1363a9"/><path d="M55.8 832.8000000000001 L58.8 831.2 V834.6 L55.8 836.2 M38.8 848.8000000000001 L42.0 850.6 L47.8 847.6 L52.4 850.0" fill="none" stroke="#1363a9" stroke-width="1.2"/>
<circle cx="56.6" cy="849.4" r="6.2" fill="#f1f0f6"/><path d="M60.7 848.5 L62.3 848.6 L62.3 850.2 L60.7 850.3 L60.1 851.7 L61.2 852.9 L60.1 854.0 L58.9 852.9 L57.5 853.5 L57.4 855.1 L55.8 855.1 L55.7 853.5 L54.3 852.9 L53.1 854.0 L52.0 852.9 L53.1 851.7 L52.5 850.3 L50.9 850.2 L50.9 848.6 L52.5 848.5 L53.1 847.1 L52.0 845.9 L53.1 844.8 L54.3 845.9 L55.7 845.3 L55.8 843.7 L57.4 843.7 L57.5 845.3 L58.9 845.9 L60.1 844.8 L61.2 845.9 L60.1 847.1 Z" fill="#f1f0f6" stroke="#1363a9" stroke-width="1"/><circle cx="56.6" cy="849.4" r="2" fill="none" stroke="#1363a9" stroke-width="1"/>
<defs><clipPath id="cABF"><rect x="780" y="60" width="86" height="31"/></clipPath><clipPath id="cKF"><path d="M1200 60 H1568 V110 H1479 V101.7 H1250 V110 H1200 Z"/></clipPath></defs>
<g clip-path="url(#cABF)"><path d="M796.4 90 V79.4 L808.6 74.6 L824.6 78.1 V90 M796.4 79.4 L812 83 L824.6 78.1" fill="none" stroke="#a0a0a0" stroke-width="0.8"/><circle cx="796.4" cy="79.4" r="0.9" fill="#999"/><circle cx="808.6" cy="74.6" r="0.9" fill="#999"/><circle cx="824.6" cy="78.1" r="0.9" fill="#999"/><circle cx="802.5" cy="77" r="0.9" fill="#999"/><circle cx="816.6" cy="76.3" r="0.9" fill="#999"/><circle cx="804" cy="81.2" r="0.9" fill="#999"/><circle cx="818.4" cy="80.6" r="0.9" fill="#999"/><circle cx="796.4" cy="88.6" r="0.9" fill="#999"/><circle cx="824.6" cy="86.4" r="0.9" fill="#999"/><g transform="translate(802.3 79.8)"><path d="M0 2.3 L8.6 4.7 L9.4 16.6 L0.6 13.8 Z" fill="#fff" stroke="#333" stroke-width="1.1" stroke-linejoin="round"/><path d="M8.6 4.7 L17 2.3 L16.6 13 L9.4 16.6 Z" fill="#cfcfd2" stroke="#333" stroke-width="1.1" stroke-linejoin="round"/><path d="M0 2.3 L8.6 0 L17 2.3 L8.6 4.7 Z" fill="#fff" stroke="#333" stroke-width="1.1" stroke-linejoin="round"/></g></g>
<g clip-path="url(#cABF)"><path d="M842.9 75 V81" stroke="#555" stroke-width="1.4"/><path d="M830 85.6 L834 86.6 M851.4 84 L855 83" stroke="#999" stroke-width="1.6"/><g transform="translate(834 80.6)"><path d="M0 2.3 L8.6 4.7 L9.4 16.6 L0.6 13.8 Z" fill="#fff" stroke="#333" stroke-width="1.1" stroke-linejoin="round"/><path d="M8.6 4.7 L17 2.3 L16.6 13 L9.4 16.6 Z" fill="#cfcfd2" stroke="#333" stroke-width="1.1" stroke-linejoin="round"/><path d="M0 2.3 L8.6 0 L17 2.3 L8.6 4.7 Z" fill="#fff" stroke="#333" stroke-width="1.1" stroke-linejoin="round"/></g></g>
<path d="M861 85.3 L866.4 86.2 M880 88.9 L888 90.6" stroke="#999" stroke-width="1.8"/><g transform="translate(866.3 79.6)"><path d="M0 2.3 L8.6 4.7 L9.4 16.6 L0.6 13.8 Z" fill="#fff" stroke="#333" stroke-width="1.1" stroke-linejoin="round"/><path d="M8.6 4.7 L17 2.3 L16.6 13 L9.4 16.6 Z" fill="#cfcfd2" stroke="#333" stroke-width="1.1" stroke-linejoin="round"/><path d="M0 2.3 L8.6 0 L17 2.3 L8.6 4.7 Z" fill="#fff" stroke="#333" stroke-width="1.1" stroke-linejoin="round"/></g><path d="M879.6 88.8 L888 90.6" stroke="#999" stroke-width="1.8"/>
<g transform="translate(898.4 79.8)"><path d="M0 2.3 L8.6 4.7 L9.4 16.6 L0.6 13.8 Z" fill="#fff" stroke="#333" stroke-width="1.1" stroke-linejoin="round"/><path d="M8.6 4.7 L17 2.3 L16.6 13 L9.4 16.6 Z" fill="#cfcfd2" stroke="#333" stroke-width="1.1" stroke-linejoin="round"/><path d="M0 2.3 L8.6 0 L17 2.3 L8.6 4.7 Z" fill="#fff" stroke="#333" stroke-width="1.1" stroke-linejoin="round"/></g><path d="M895 92.4 L903.4 90 M915.7 84 L919 83.2" stroke="#999" stroke-width="1.8"/>
<path d="M938.9 75 V81 M938.9 96 V101.7" stroke="#555" stroke-width="1.4"/><g transform="translate(930.4 80.4)"><path d="M0 2.3 L8.6 4.7 L9.4 16.6 L0.6 13.8 Z" fill="#fff" stroke="#333" stroke-width="1.1" stroke-linejoin="round"/><path d="M8.6 4.7 L17 2.3 L16.6 13 L9.4 16.6 Z" fill="#cfcfd2" stroke="#333" stroke-width="1.1" stroke-linejoin="round"/><path d="M0 2.3 L8.6 0 L17 2.3 L8.6 4.7 Z" fill="#fff" stroke="#333" stroke-width="1.1" stroke-linejoin="round"/></g>
<path d="M980.4 80.2 L987 79.6 L992 81.4 L992 91 L986.4 92 L980.4 90 Z" fill="#aaa" stroke="#666" stroke-width="0.8"/><path d="M986.4 82.4 V92" stroke="#666" stroke-width="0.7"/><path d="M975.6 88.8 L981 87.2" stroke="#999" stroke-width="1.2"/><path d="M974.6 89.2 L977.6 86.8 L978 90 Z" fill="#999"/><g transform="rotate(-18 968.5 92)"><rect x="962.6" y="88.6" width="10.4" height="7.4" rx="1.4" fill="#fff" stroke="#555" stroke-width="1"/><path d="M973 90.6 L976 89 V95.6 L973 94 Z" fill="#fff" stroke="#555" stroke-width="0.9"/></g><path d="M968.4 96.6 L966.4 102.4 M969.6 96.6 L971.8 102.4 M969 96.6 V100.6" stroke="#555" stroke-width="0.9"/>
<rect x="1008.2" y="73" width="20.6" height="2.6" rx="1.2" fill="#0b2a44"/><path d="M1011.6 75.6 H1025 L1023.4 79.8 H1013.2 Z" fill="#1d8fd0" stroke="#0b2a44" stroke-width="0.6"/><rect x="1015.4" y="79.8" width="6" height="2.4" fill="#0d5fa0"/><path d="M1014.6 82.2 H1022.2 L1019.8 88.6 H1017 Z" fill="#1d8fd0" stroke="#0b2a44" stroke-width="0.5"/><path d="M1017 88.6 H1019.8 L1018.8 104.4 H1018 Z" fill="#222"/><path d="M1016.4 90.6 h4 M1016.6 92.8 h3.6 M1016.8 95 h3.2 M1017 97.2 h2.8 M1017.2 99.4 h2.4" stroke="#222" stroke-width="0.9"/>
<text x="1037.6" y="104.6" transform="rotate(-90 1037.6 104.6)" font-family="Liberation Sans, sans-serif" font-weight="bold" font-size="14" textLength="31.4" lengthAdjust="spacingAndGlyphs" fill="#f01020">ABF_</text>
<path d="M1061.2 90.2 L1065.2 94 L1072.4 85.6" fill="none" stroke="#111" stroke-width="1.9"/><path d="M1204 87.4 H1211.4 L1207.7 91.2 Z" fill="#777"/>
<g clip-path="url(#cKF)"><text x="1233.6" y="93.6" font-family="Liberation Serif, serif" font-weight="bold" font-style="italic" font-size="27" textLength="30" lengthAdjust="spacingAndGlyphs" fill="#14149c">Cz</text><rect x="1234" y="99" width="30" height="5.4" fill="#ff00c0"/></g>
<path d="M1290.6 86 C1291 80 1296 77.4 1301 77.4 C1307 77 1311.6 78.6 1311.8 82 C1312 90 1308 97 1301.6 99.2 C1299 97 1295 94 1293.6 91 C1293 89 1291 88.6 1290.6 86 Z" fill="#f2cfc6" stroke="#1a1a1a" stroke-width="1.2"/><path d="M1297 78.6 C1296 84 1298 90 1296.6 95 M1302 77.8 C1303 84 1300.6 90 1302.6 97 M1307 78.4 C1308 84 1306 88 1307 93" fill="none" stroke="#333" stroke-width="0.7"/>
<path d="M1327 88.4 C1327 74 1340 74 1340.4 91" fill="none" stroke="#f07060" stroke-width="1.1"/><path d="M1321.4 89 L1330 88.4 L1331.6 95.4 L1322 96.4 Z" fill="#20a566" stroke="#0a5a30" stroke-width="0.9"/><circle cx="1339.8" cy="95.2" r="4.3" fill="#f2b400" stroke="#7a5a00" stroke-width="0.9"/>
<path d="M1368.6 76.6 L1376.8 92 L1372 99.6 L1361 101 L1354 96 L1353.6 88.6 L1361 82.6 Z M1368.6 76.6 L1361 82.6 L1366 89 L1376.8 92 M1366 89 L1361 101 M1353.6 88.6 L1359 90 L1366 89 M1359 90 L1357 98.6 M1354 96 L1362 94 L1372 99.6" fill="none" stroke="#12a012" stroke-width="1.1" stroke-linejoin="round"/>
<g clip-path="url(#cKF)"><rect x="1395.6" y="82" width="4.4" height="15" fill="#9a9a9a"/><rect x="1419" y="82" width="7" height="15" fill="#9a9a9a"/><path d="M1405 82.4 H1413.4 L1418.4 96.8 H1401.2 Z" fill="#444"/><path d="M1403 78.6 H1414.6 L1422 101 H1401 Z" fill="none" stroke="#d83030" stroke-width="1.2"/><circle cx="1403" cy="78.6" r="2.5" fill="#fff" stroke="#d83030" stroke-width="1.2"/><circle cx="1414.6" cy="78.6" r="2.5" fill="#fff" stroke="#d83030" stroke-width="1.2"/><circle cx="1401" cy="101.4" r="2.5" fill="#fff" stroke="#d83030" stroke-width="1.2"/><circle cx="1422" cy="101.4" r="2.5" fill="#fff" stroke="#d83030" stroke-width="1.2"/></g>
<g transform="translate(1446 78)"><path d="M0.4 7 C3 2.6 8 0.6 13 0.4 C18 0.6 22 3 22.6 7 L22.4 14 L15 20.6 C13 21.6 10 21.6 8 20.6 L1 14.6 Z" fill="#c8a77c" stroke="#5a4630" stroke-width="0.9"/><path d="M0.4 7 C3 2.6 8 0.6 13 0.4 C18 0.6 22 3 22.6 7 C19 9.6 15.6 11 11.6 11.4 C7 11 3 9.6 0.4 7 Z" fill="#f2b81e" stroke="#5a4630" stroke-width="0.8"/><path d="M8 11 C8 15 8 18 8.4 20.8 C10 21.6 13 21.6 15 20.6 C15.4 17.6 15.4 14 15.4 11 C13 11.6 10 11.6 8 11 Z" fill="#f2b81e" stroke="#5a4630" stroke-width="0.7"/></g>
<g transform="translate(1478 78)"><path d="M0.4 7 C3 2.6 8 0.6 13 0.4 C18 0.6 22 3 22.6 7 L22.4 14 L15 20.6 C13 21.6 10 21.6 8 20.6 L1 14.6 Z" fill="#c8a77c" stroke="#5a4630" stroke-width="0.9"/><path d="M0.4 7 C3 2.6 8 0.6 13 0.4 C18 0.6 22 3 22.6 7 C19 9.6 15.6 11 11.6 11.4 C7 11 3 9.6 0.4 7 Z" fill="#e4c596" stroke="#5a4630" stroke-width="0.8"/><path d="M8 11 C8 15 8 18 8.4 20.8 C10 21.6 13 21.6 15 20.6 C15.4 17.6 15.4 14 15.4 11 C13 11.6 10 11.6 8 11 Z" fill="#b4c8f2" stroke="#5a4630" stroke-width="0.7"/></g>
<g transform="translate(1510 78)"><path d="M0.4 7 C3 2.6 8 0.6 13 0.4 C18 0.6 22 3 22.6 7 L22.4 14 L15 20.6 C13 21.6 10 21.6 8 20.6 L1 14.6 Z" fill="#c8a77c" stroke="#5a4630" stroke-width="0.9"/><path d="M0.4 7 C3 2.6 8 0.6 13 0.4 C18 0.6 22 3 22.6 7 C19 9.6 15.6 11 11.6 11.4 C7 11 3 9.6 0.4 7 Z" fill="#e4c596" stroke="#5a4630" stroke-width="0.8"/><path d="M8 11 C8 15 8 18 8.4 20.8 C10 21.6 13 21.6 15 20.6 C15.4 17.6 15.4 14 15.4 11 C13 11.6 10 11.6 8 11 Z" fill="#c4dca6" stroke="#5a4630" stroke-width="0.7"/></g>
<path d="M1556 84.6 L1568 78.6 V100 L1556 94.6 Z" fill="#fff" stroke="#000" stroke-width="1.4"/><path d="M1556 88 L1568 92.6 M1556 91.4 L1568 96.4" stroke="#000" stroke-width="1.2"/><text x="1560.4" y="88.6" font-family="Liberation Sans, sans-serif" font-weight="bold" font-size="9" fill="#e01010">S</text>
<g>
<circle cx="326" cy="988" r="13" fill="#fdeee6" stroke="#f0a080" stroke-width="0.8"/><rect x="322.6" y="977.6" width="6.8" height="3" rx="1" fill="#f06020"/>
<path d="M360 980 L369 976.4 V980 Z" fill="#333"/>
<rect x="400" y="978.4" width="17.5" height="2" fill="#f0e060"/>
<rect x="437" y="978.4" width="9" height="2" fill="#f0e060"/>
<rect x="446" y="978.4" width="11" height="2" fill="#2040d0"/>
<rect x="478" y="978.4" width="3" height="2" fill="#60c060"/>
<rect x="523" y="978.4" width="3" height="2" fill="#f0a0a0"/>
<rect x="544" y="978.4" width="3" height="2" fill="#40a060"/>
<rect x="585" y="978.4" width="16" height="2" fill="#70b080"/>
<rect x="622" y="978.4" width="14" height="2" fill="#a8b8a8"/>
<rect x="655" y="978.4" width="13" height="2" fill="#e0b0b0"/>
<rect x="690" y="978.4" width="14" height="2" fill="#d03030"/>
<rect x="743" y="978.4" width="17" height="2" fill="#58b8e8"/>
<rect x="813" y="978.4" width="15" height="2" fill="#7cc8e8"/>
<rect x="877" y="978.4" width="14" height="2" fill="#1a90d0"/>
<rect x="909" y="978.4" width="14" height="2" fill="#7cc8e8"/>
<rect x="1021" y="978.4" width="18" height="2" fill="#8a8a8a"/>
<rect x="1053" y="978.4" width="18" height="2" fill="#8a8a8a"/>
<rect x="1085" y="978.4" width="18" height="2" fill="#8a8a8a"/>
<rect x="1117" y="978.4" width="18" height="2" fill="#8a8a8a"/>
<rect x="1124" y="977.6" width="3" height="2.4" fill="#a01010"/>
<circle cx="1218" cy="988" r="12.4" fill="#fdeee6" stroke="#f0a080" stroke-width="0.8"/><rect x="1214.6" y="977.6" width="6.8" height="3" rx="1" fill="#f06020"/>
<path d="M1242 978 l4 2 M1250 979 a3 3 0 0 1 6 0 M1256 979 a3 3 0 0 1 6 0" stroke="#f08020" stroke-width="1.4" fill="none"/><rect x="1249" y="978.6" width="13" height="1.6" fill="#333"/>
<rect x="1275" y="976.8" width="25.6" height="3.4" fill="#222"/><rect x="1277" y="977.8" width="21" height="2.4" fill="#f09020"/>
<circle cx="1321" cy="980.6" r="5" fill="#222"/>
<rect x="1343.6" y="975.4" width="29.6" height="12" rx="4" fill="#dcebf8" stroke="#2a86d0" stroke-width="1.1"/><rect x="1349" y="977.8" width="16.6" height="5" fill="#dcebf8" stroke="#234" stroke-width="1.1"/>
<path d="M1377.6 980 L1381.6 977 L1385.6 980 M1395 980 L1399 977 L1403 980" fill="none" stroke="#333" stroke-width="0.9"/><path d="M1428 980 L1434 976.6 V980 Z" fill="#222"/>
<rect x="1441" y="977.6" width="25.6" height="5" fill="#f1f0f6" stroke="#333" stroke-width="1.1"/>
<rect x="1471.6" y="975" width="30.4" height="12" rx="4" fill="#dcebf8" stroke="#2a86d0" stroke-width="1.1"/><circle cx="1481" cy="982" r="4.4" fill="#aaa"/><circle cx="1491" cy="982" r="4.4" fill="#aaa"/><rect x="1484" y="978.4" width="5" height="3" fill="#f08020"/>
<path d="M1516 980 L1522 978 M1560 980 L1566 977.6" stroke="#777" stroke-width="1.2"/>
</g></svg>
</body></html>
